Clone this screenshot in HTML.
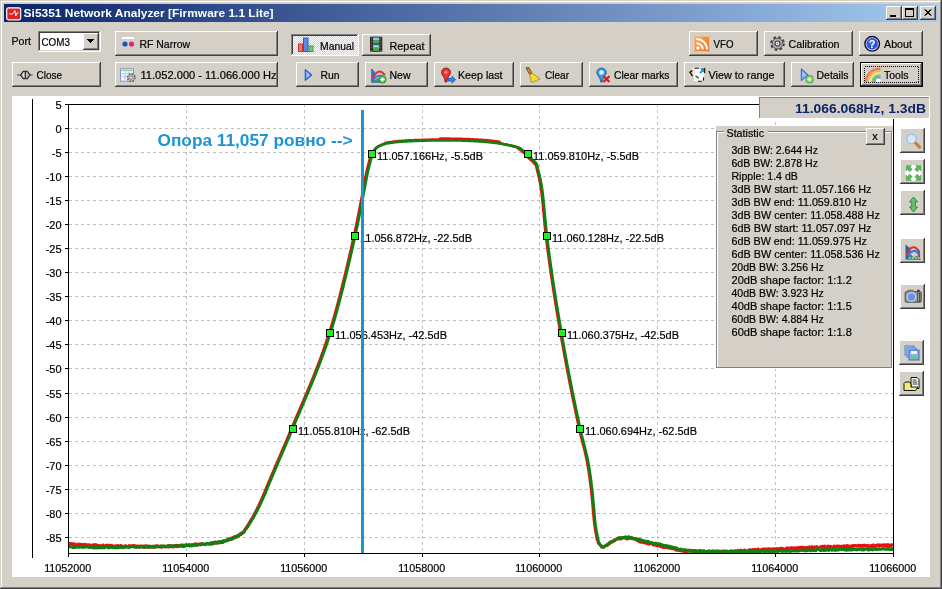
<!DOCTYPE html>
<html><head><meta charset="utf-8"><title>Si5351 Network Analyzer</title><style>html,body{margin:0;padding:0;background:#D4D0C8;overflow:hidden}svg{display:block;will-change:transform}</style></head><body>
<svg width="942" height="589" viewBox="0 0 942 589" font-family="Liberation Sans, sans-serif" shape-rendering="crispEdges">
<defs><linearGradient id="tg" x1="0" x2="1" y1="0" y2="0"><stop offset="0" stop-color="#0A246A"/><stop offset="1" stop-color="#A6CAF0"/></linearGradient><linearGradient id="og" x1="0" y1="0" x2="1" y2="1"><stop offset="0" stop-color="#F8AC68"/><stop offset="1" stop-color="#EE6C14"/></linearGradient><pattern id="dith" width="2" height="2" patternUnits="userSpaceOnUse"><rect width="2" height="2" fill="#D4D0C8"/><rect width="1" height="1" fill="#fff"/><rect x="1" y="1" width="1" height="1" fill="#fff"/></pattern></defs>
<rect x="0" y="0" width="942" height="589" fill="#D4D0C8" />
<rect x="1" y="1" width="939" height="1" fill="#FFFFFF" />
<rect x="1" y="1" width="1" height="586" fill="#FFFFFF" />
<rect x="0" y="588" width="942" height="1" fill="#404040" />
<rect x="941" y="0" width="1" height="589" fill="#404040" />
<rect x="1" y="587" width="940" height="1" fill="#808080" />
<rect x="940" y="1" width="1" height="587" fill="#808080" />
<rect x="4" y="4" width="934" height="18" fill="url(#tg)" />
<g shape-rendering="auto">
<g transform="translate(6,7)"><rect x="0.7" y="0.8" width="14" height="12" rx="1.8" fill="#E02424" stroke="#fff" stroke-width="1.2"/><path d="M3.5 7h2.5l1.500-1 1.300-2.500 1 5.500 1-3h1.700" fill="none" stroke="#fff" stroke-width="1"/></g>
</g>
<text x="23.6" y="17" font-size="11" font-weight="bold" fill="#fff" textLength="250" lengthAdjust="spacingAndGlyphs" >Si5351 Network Analyzer [Firmware 1.1 Lite]</text>
<rect x="886" y="6" width="16" height="14" fill="#D4D0C8" />
<rect x="886" y="6" width="15" height="1" fill="#FFFFFF" />
<rect x="886" y="6" width="1" height="13" fill="#FFFFFF" />
<rect x="886" y="19" width="16" height="1" fill="#404040" />
<rect x="901" y="6" width="1" height="14" fill="#404040" />
<rect x="887" y="18" width="14" height="1" fill="#808080" />
<rect x="900" y="7" width="1" height="12" fill="#808080" />
<rect x="902" y="6" width="16" height="14" fill="#D4D0C8" />
<rect x="902" y="6" width="15" height="1" fill="#FFFFFF" />
<rect x="902" y="6" width="1" height="13" fill="#FFFFFF" />
<rect x="902" y="19" width="16" height="1" fill="#404040" />
<rect x="917" y="6" width="1" height="14" fill="#404040" />
<rect x="903" y="18" width="14" height="1" fill="#808080" />
<rect x="916" y="7" width="1" height="12" fill="#808080" />
<rect x="920" y="6" width="16" height="14" fill="#D4D0C8" />
<rect x="920" y="6" width="15" height="1" fill="#FFFFFF" />
<rect x="920" y="6" width="1" height="13" fill="#FFFFFF" />
<rect x="920" y="19" width="16" height="1" fill="#404040" />
<rect x="935" y="6" width="1" height="14" fill="#404040" />
<rect x="921" y="18" width="14" height="1" fill="#808080" />
<rect x="934" y="7" width="1" height="12" fill="#808080" />
<rect x="890" y="15" width="6" height="2" fill="#000" />
<rect x="905" y="8" width="9" height="9" fill="#000" />
<rect x="906" y="10" width="7" height="6" fill="#D4D0C8" />
<path d="M924.5 9.5l6 6M925.5 9.5l6 6M930.5 9.5l-6 6M931.5 9.5l-6 6" stroke="#000" stroke-width="1" fill="none" shape-rendering="auto"/>
<text x="11.5" y="45" font-size="11" fill="#000" textLength="19.5" lengthAdjust="spacingAndGlyphs" stroke="#000" stroke-width="0.2" >Port</text>
<rect x="38" y="31" width="63" height="21" fill="#FFFFFF" />
<rect x="38" y="31" width="62" height="1" fill="#808080" />
<rect x="38" y="31" width="1" height="20" fill="#808080" />
<rect x="39" y="32" width="60" height="1" fill="#404040" />
<rect x="39" y="32" width="1" height="18" fill="#404040" />
<rect x="38" y="51" width="63" height="1" fill="#FFFFFF" />
<rect x="100" y="31" width="1" height="21" fill="#FFFFFF" />
<rect x="39" y="50" width="61" height="1" fill="#D4D0C8" />
<rect x="99" y="32" width="1" height="19" fill="#D4D0C8" />
<rect x="83" y="33" width="16" height="17" fill="#D4D0C8" />
<rect x="83" y="33" width="15" height="1" fill="#FFFFFF" />
<rect x="83" y="33" width="1" height="16" fill="#FFFFFF" />
<rect x="83" y="49" width="16" height="1" fill="#404040" />
<rect x="98" y="33" width="1" height="17" fill="#404040" />
<rect x="84" y="48" width="14" height="1" fill="#808080" />
<rect x="97" y="34" width="1" height="15" fill="#808080" />
<rect x="87" y="39" width="7" height="1" fill="#000" />
<rect x="88" y="40" width="5" height="1" fill="#000" />
<rect x="89" y="41" width="3" height="1" fill="#000" />
<rect x="90" y="42" width="1" height="1" fill="#000" />
<text x="41.5" y="46" font-size="11" fill="#000" textLength="28.5" lengthAdjust="spacingAndGlyphs" stroke="#000" stroke-width="0.2" >COM3</text>
<rect x="115" y="31" width="163" height="25" fill="#D4D0C8" />
<rect x="115" y="31" width="162" height="1" fill="#FFFFFF" />
<rect x="115" y="31" width="1" height="24" fill="#FFFFFF" />
<rect x="115" y="55" width="163" height="1" fill="#404040" />
<rect x="277" y="31" width="1" height="25" fill="#404040" />
<rect x="116" y="54" width="161" height="1" fill="#808080" />
<rect x="276" y="32" width="1" height="23" fill="#808080" />
<g shape-rendering="auto">
<g transform="translate(122,37)"><rect x="0" y="0" width="12" height="2" fill="#fff"/><circle cx="3" cy="7" r="2.6" fill="#1557C0"/><circle cx="9.5" cy="7" r="2.6" fill="#E8207A"/></g>
</g>
<text x="139.5" y="48" font-size="11" fill="#000" textLength="50.5" lengthAdjust="spacingAndGlyphs" stroke="#000" stroke-width="0.2" >RF Narrow</text>
<rect x="291" y="34" width="68" height="22" fill="url(#dith)" />
<rect x="291" y="34" width="67" height="1" fill="#808080" />
<rect x="291" y="34" width="1" height="21" fill="#808080" />
<rect x="292" y="35" width="65" height="1" fill="#404040" />
<rect x="292" y="35" width="1" height="19" fill="#404040" />
<rect x="291" y="55" width="68" height="1" fill="#FFFFFF" />
<rect x="358" y="34" width="1" height="22" fill="#FFFFFF" />
<g shape-rendering="auto">
<g transform="translate(298,37.5)"><rect x="0.5" y="6.5" width="4" height="7.5" fill="#F07070" stroke="#D03030"/><rect x="5.5" y="0.5" width="4.5" height="13.5" fill="#5C8CE8" stroke="#2C5CC8"/><rect x="11" y="8.5" width="4" height="5.5" fill="#78C878" stroke="#3C9C3C"/></g>
</g>
<text x="320" y="49.5" font-size="11" fill="#000" textLength="34" lengthAdjust="spacingAndGlyphs" stroke="#000" stroke-width="0.2" >Manual</text>
<rect x="362" y="34" width="69" height="22" fill="#D4D0C8" />
<rect x="362" y="34" width="68" height="1" fill="#FFFFFF" />
<rect x="362" y="34" width="1" height="21" fill="#FFFFFF" />
<rect x="362" y="55" width="69" height="1" fill="#404040" />
<rect x="430" y="34" width="1" height="22" fill="#404040" />
<rect x="363" y="54" width="67" height="1" fill="#808080" />
<rect x="429" y="35" width="1" height="20" fill="#808080" />
<g shape-rendering="auto">
<g transform="translate(370,36.8)"><rect x="0" y="0" width="12.300" height="14.800" fill="#2A2A2A"/><rect x="3" y="0" width="6.300" height="14.800" fill="#1A4020"/><rect x="3" y="0.800" width="6.300" height="3" fill="#8CC8E8"/><rect x="3" y="3.800" width="6.300" height="3" fill="#48A848"/><rect x="3" y="8" width="6.300" height="3" fill="#8CC8E8"/><rect x="3" y="11" width="6.300" height="3" fill="#48A848"/><path d="M1.500 1v13M10.800 1v13" stroke="#707070" stroke-width="1" stroke-dasharray="1.500 1.500"/></g>
</g>
<text x="389.5" y="49.5" font-size="11" fill="#000" textLength="35" lengthAdjust="spacingAndGlyphs" stroke="#000" stroke-width="0.2" >Repeat</text>
<rect x="689" y="31" width="69" height="25" fill="#D4D0C8" />
<rect x="689" y="31" width="68" height="1" fill="#FFFFFF" />
<rect x="689" y="31" width="1" height="24" fill="#FFFFFF" />
<rect x="689" y="55" width="69" height="1" fill="#404040" />
<rect x="757" y="31" width="1" height="25" fill="#404040" />
<rect x="690" y="54" width="67" height="1" fill="#808080" />
<rect x="756" y="32" width="1" height="23" fill="#808080" />
<g shape-rendering="auto">
<g transform="translate(694,36)"><rect x="0" y="0" width="16" height="16" rx="1.500" fill="url(#og)"/><rect x="0.500" y="0.500" width="15" height="15" rx="1.500" fill="none" stroke="#F8B878" stroke-width="1"/><circle cx="4" cy="12" r="1.800" fill="#fff"/><path d="M2.500 7.200a6.300 6.300 0 0 1 6.300 6.300" fill="none" stroke="#fff" stroke-width="2"/><path d="M2.500 3a10.500 10.500 0 0 1 10.500 10.500" fill="none" stroke="#fff" stroke-width="2"/></g>
</g>
<text x="713.5" y="48" font-size="11" fill="#000" textLength="20" lengthAdjust="spacingAndGlyphs" stroke="#000" stroke-width="0.2" >VFO</text>
<rect x="764" y="31" width="89" height="25" fill="#D4D0C8" />
<rect x="764" y="31" width="88" height="1" fill="#FFFFFF" />
<rect x="764" y="31" width="1" height="24" fill="#FFFFFF" />
<rect x="764" y="55" width="89" height="1" fill="#404040" />
<rect x="852" y="31" width="1" height="25" fill="#404040" />
<rect x="765" y="54" width="87" height="1" fill="#808080" />
<rect x="851" y="32" width="1" height="23" fill="#808080" />
<g shape-rendering="auto">
<g transform="translate(769.5,35.5)"><circle cx="8" cy="8" r="6.2" fill="none" stroke="#484848" stroke-width="2.4" stroke-dasharray="2.6 2.27"/><circle cx="8" cy="8" r="5.4" fill="#ABABAB" stroke="#505050" stroke-width="1"/><circle cx="8" cy="8" r="2.5" fill="#F4F4F4" stroke="#404040" stroke-width="1.2"/><circle cx="8" cy="8" r="0.9" fill="#909090"/></g>
</g>
<text x="788.5" y="48" font-size="11" fill="#000" textLength="51" lengthAdjust="spacingAndGlyphs" stroke="#000" stroke-width="0.2" >Calibration</text>
<rect x="859" y="31" width="64" height="25" fill="#D4D0C8" />
<rect x="859" y="31" width="63" height="1" fill="#FFFFFF" />
<rect x="859" y="31" width="1" height="24" fill="#FFFFFF" />
<rect x="859" y="55" width="64" height="1" fill="#404040" />
<rect x="922" y="31" width="1" height="25" fill="#404040" />
<rect x="860" y="54" width="62" height="1" fill="#808080" />
<rect x="921" y="32" width="1" height="23" fill="#808080" />
<g shape-rendering="auto">
<g transform="translate(864.2,35.8)"><circle cx="8" cy="8" r="7.300" fill="#C8D8FF" stroke="#10102C" stroke-width="1.400"/><circle cx="8" cy="8" r="5.700" fill="#2C54D4"/><circle cx="7" cy="6.500" r="3.500" fill="#4870E4" opacity="0.600"/><text x="8" y="12" font-size="11" font-weight="bold" fill="#fff" text-anchor="middle" font-family="Liberation Sans, sans-serif">?</text></g>
</g>
<text x="884" y="48" font-size="11" fill="#000" textLength="28" lengthAdjust="spacingAndGlyphs" stroke="#000" stroke-width="0.2" >About</text>
<rect x="12" y="62" width="89" height="25" fill="#D4D0C8" />
<rect x="12" y="62" width="88" height="1" fill="#FFFFFF" />
<rect x="12" y="62" width="1" height="24" fill="#FFFFFF" />
<rect x="12" y="86" width="89" height="1" fill="#404040" />
<rect x="100" y="62" width="1" height="25" fill="#404040" />
<rect x="13" y="85" width="87" height="1" fill="#808080" />
<rect x="99" y="63" width="1" height="23" fill="#808080" />
<g shape-rendering="auto">
<g transform="translate(17,69)"><path d="M0 6h3.800M12.800 6h3" stroke="#505050" stroke-width="1.1"/><path d="M3.500 6L6.300 2.300H10.300L13.100 6L10.300 9.700H6.300Z" fill="#BEBEBE" stroke="#181818" stroke-width="1.100" stroke-linejoin="round"/><path d="M6 4.500l1.500-1.500v6l-1.500-1.500z" fill="#E8E8E8"/><path d="M8.300 2.300v7.400" stroke="#181818" stroke-width="1.100"/></g>
</g>
<text x="36.5" y="78.5" font-size="11" fill="#000" textLength="25.5" lengthAdjust="spacingAndGlyphs" stroke="#000" stroke-width="0.2" >Close</text>
<rect x="115" y="62" width="163" height="25" fill="#D4D0C8" />
<rect x="115" y="62" width="162" height="1" fill="#FFFFFF" />
<rect x="115" y="62" width="1" height="24" fill="#FFFFFF" />
<rect x="115" y="86" width="163" height="1" fill="#404040" />
<rect x="277" y="62" width="1" height="25" fill="#404040" />
<rect x="116" y="85" width="161" height="1" fill="#808080" />
<rect x="276" y="63" width="1" height="23" fill="#808080" />
<g shape-rendering="auto">
<g transform="translate(120,68.2)"><rect x="0.500" y="0.500" width="13" height="12.500" fill="#EEF4FC" stroke="#7C9CD0" stroke-width="1"/><rect x="1.500" y="1.500" width="11" height="1.500" fill="#98CC98"/><path d="M1 5.500h12M1 8.500h12M5 4v8M9 4v8" stroke="#B8CCEC" stroke-width="1"/><circle cx="11.200" cy="9.400" r="3.800" fill="#B0B0B0" stroke="#686868" stroke-width="1.600" stroke-dasharray="1.600 1.380"/><circle cx="11.200" cy="9.400" r="1.400" fill="#F0F0F0" stroke="#707070" stroke-width="0.600"/></g>
</g>
<text x="140.5" y="79" font-size="11" fill="#000" textLength="136" lengthAdjust="spacingAndGlyphs" stroke="#000" stroke-width="0.2" >11.052.000 - 11.066.000 Hz</text>
<rect x="296" y="62" width="63" height="25" fill="#D4D0C8" />
<rect x="296" y="62" width="62" height="1" fill="#FFFFFF" />
<rect x="296" y="62" width="1" height="24" fill="#FFFFFF" />
<rect x="296" y="86" width="63" height="1" fill="#404040" />
<rect x="358" y="62" width="1" height="25" fill="#404040" />
<rect x="297" y="85" width="61" height="1" fill="#808080" />
<rect x="357" y="63" width="1" height="23" fill="#808080" />
<g shape-rendering="auto">
<g transform="translate(304.5,69)"><path d="M0.800 0.600L7.200 6L0.800 11.400z" fill="#6C9CEC" stroke="#2C5CC8" stroke-width="1.200" stroke-linejoin="round"/><path d="M2 3l3.500 3-3.500 3z" fill="#A0C0F8"/></g>
</g>
<text x="320.5" y="78.5" font-size="11" fill="#000" textLength="19" lengthAdjust="spacingAndGlyphs" stroke="#000" stroke-width="0.2" >Run</text>
<rect x="365" y="62" width="63" height="25" fill="#D4D0C8" />
<rect x="365" y="62" width="62" height="1" fill="#FFFFFF" />
<rect x="365" y="62" width="1" height="24" fill="#FFFFFF" />
<rect x="365" y="86" width="63" height="1" fill="#404040" />
<rect x="427" y="62" width="1" height="25" fill="#404040" />
<rect x="366" y="85" width="61" height="1" fill="#808080" />
<rect x="426" y="63" width="1" height="23" fill="#808080" />
<g shape-rendering="auto">
<g transform="translate(371,68)"><path d="M1 1v13h13" fill="none" stroke="#3060A8" stroke-width="1.6"/><path d="M1 1l3 3v9h-3z" fill="#3C6CC0"/><path d="M2 12c2-9 7-11 12-5" fill="none" stroke="#E03030" stroke-width="2"/><path d="M2 13c3-6 8-7 12-3" fill="none" stroke="#3C78E0" stroke-width="2"/><path d="M3 13.5l4-4 3 2.5v2z" fill="#38A048"/><circle cx="11.5" cy="11.5" r="3.6" fill="#58C058" stroke="#2C8C2C"/><path d="M11.5 9.3v4.4M9.3 11.5h4.4" stroke="#fff" stroke-width="1.4"/></g>
</g>
<text x="389.5" y="78.5" font-size="11" fill="#000" textLength="21" lengthAdjust="spacingAndGlyphs" stroke="#000" stroke-width="0.2" >New</text>
<rect x="434" y="62" width="80" height="25" fill="#D4D0C8" />
<rect x="434" y="62" width="79" height="1" fill="#FFFFFF" />
<rect x="434" y="62" width="1" height="24" fill="#FFFFFF" />
<rect x="434" y="86" width="80" height="1" fill="#404040" />
<rect x="513" y="62" width="1" height="25" fill="#404040" />
<rect x="435" y="85" width="78" height="1" fill="#808080" />
<rect x="512" y="63" width="1" height="23" fill="#808080" />
<g shape-rendering="auto">
<g transform="translate(441,67.5)"><path d="M5 0.6c-2.6 0-4.4 1.9-4.4 4.3 0 2.2 2 3.6 3 6.1l0.6 3.5h1.6l0.6-3.5c1-2.5 3-3.9 3-6.1 0-2.4-1.800-4.300-4.400-4.300z" fill="#E83838" stroke="#901010" stroke-width="1"/><circle cx="5" cy="4.800" r="1.5" fill="#FF9090"/><path d="M7 11h4v-2.200l3.600 3.400-3.600 3.400v-2.200h-4z" fill="#3888F0" stroke="#1050B0" stroke-width="0.800"/></g>
</g>
<text x="458" y="78.5" font-size="11" fill="#000" textLength="44.5" lengthAdjust="spacingAndGlyphs" stroke="#000" stroke-width="0.2" >Keep last</text>
<rect x="520" y="62" width="63" height="25" fill="#D4D0C8" />
<rect x="520" y="62" width="62" height="1" fill="#FFFFFF" />
<rect x="520" y="62" width="1" height="24" fill="#FFFFFF" />
<rect x="520" y="86" width="63" height="1" fill="#404040" />
<rect x="582" y="62" width="1" height="25" fill="#404040" />
<rect x="521" y="85" width="61" height="1" fill="#808080" />
<rect x="581" y="63" width="1" height="23" fill="#808080" />
<g shape-rendering="auto">
<g transform="translate(525,67.5)"><path d="M1 0.300l2.800-0.300 2.700 4.800-2.500 1.400z" fill="#C88838" stroke="#6C4810" stroke-width="0.900"/><path d="M4 6.300l2.600-1.500 0.800 1.200-2.700 1.600z" fill="#E05030"/><path d="M4.600 7.500l2.900-1.700 7.500 5.700-2.500 1 -1 1.200-2.300-0.300-1.200 1.300-2.300-0.500c0.300-2.300-0.200-4.500-1.100-6.700z" fill="#F4DC30" stroke="#A88C10" stroke-width="0.900" stroke-linejoin="round"/></g>
</g>
<text x="545" y="78.5" font-size="11" fill="#000" textLength="24" lengthAdjust="spacingAndGlyphs" stroke="#000" stroke-width="0.2" >Clear</text>
<rect x="589" y="62" width="89" height="25" fill="#D4D0C8" />
<rect x="589" y="62" width="88" height="1" fill="#FFFFFF" />
<rect x="589" y="62" width="1" height="24" fill="#FFFFFF" />
<rect x="589" y="86" width="89" height="1" fill="#404040" />
<rect x="677" y="62" width="1" height="25" fill="#404040" />
<rect x="590" y="85" width="87" height="1" fill="#808080" />
<rect x="676" y="63" width="1" height="23" fill="#808080" />
<g shape-rendering="auto">
<g transform="translate(596,67.5)"><path d="M5.500 0.600c-2.700 0-4.700 1.900-4.700 4.400 0 2.200 2.200 3.700 3.200 6.200l0.700 3.300h1.600l0.700-3.300c1-2.500 3.200-4 3.200-6.200 0-2.500-2-4.400-4.700-4.400z" fill="#3C9CE8" stroke="#1060A8" stroke-width="1"/><circle cx="5.500" cy="5" r="2.300" fill="#E8F4FF"/><path d="M7.500 8.500l6 6M13.500 8.500l-6 6" stroke="#E01818" stroke-width="2.200"/></g>
</g>
<text x="614" y="78.5" font-size="11" fill="#000" textLength="55.5" lengthAdjust="spacingAndGlyphs" stroke="#000" stroke-width="0.2" >Clear marks</text>
<rect x="684" y="62" width="101" height="25" fill="#D4D0C8" />
<rect x="684" y="62" width="100" height="1" fill="#FFFFFF" />
<rect x="684" y="62" width="1" height="24" fill="#FFFFFF" />
<rect x="684" y="86" width="101" height="1" fill="#404040" />
<rect x="784" y="62" width="1" height="25" fill="#404040" />
<rect x="685" y="85" width="99" height="1" fill="#808080" />
<rect x="783" y="63" width="1" height="23" fill="#808080" />
<g shape-rendering="auto">
<g transform="translate(689,67.5)"><path d="M3.700 0.300L16 0.300L14.500 14L5 13.500Z" fill="#fff"/><path d="M10.800 1L16 0.300L15.500 5.400L14 3.900L11.600 6.300L10.300 5L12.700 2.600Z" fill="#1C8CE0"/><path d="M5.500 0.800H10M15.700 0.500V5.800M9 13.800H13M14.500 10V13.200" stroke="#101010" stroke-width="1.100" fill="none"/><path d="M3.300 3.100L0.900 4.600L3.600 8.600" stroke="#101010" stroke-width="1.300" fill="none"/><path d="M6.500 8.300L9.700 10.600" stroke="#305838" stroke-width="1.400"/><path d="M5.800 2.500V6.200" stroke="#F0A8A8" stroke-width="1" stroke-dasharray="1.200 1"/></g>
</g>
<text x="708.5" y="78.5" font-size="11" fill="#000" textLength="66" lengthAdjust="spacingAndGlyphs" stroke="#000" stroke-width="0.2" >View to range</text>
<rect x="791" y="62" width="63" height="25" fill="#D4D0C8" />
<rect x="791" y="62" width="62" height="1" fill="#FFFFFF" />
<rect x="791" y="62" width="1" height="24" fill="#FFFFFF" />
<rect x="791" y="86" width="63" height="1" fill="#404040" />
<rect x="853" y="62" width="1" height="25" fill="#404040" />
<rect x="792" y="85" width="61" height="1" fill="#808080" />
<rect x="852" y="63" width="1" height="23" fill="#808080" />
<g shape-rendering="auto">
<g transform="translate(800.5,68)"><path d="M0.800 1L7.500 6.800L0.800 12.600z" fill="#78A8F0" stroke="#3C70D8" stroke-width="1.100" stroke-linejoin="round"/><path d="M2 3.800l3.500 3-3.500 3z" fill="#A8C8F8"/><rect x="5.500" y="7.800" width="7" height="7" rx="2" fill="#8CD078" stroke="#4CA040" stroke-width="1"/><path d="M9 9.300v4M7 11.300h4" stroke="#fff" stroke-width="1.300"/></g>
</g>
<text x="816.5" y="78.5" font-size="11" fill="#000" textLength="32" lengthAdjust="spacingAndGlyphs" stroke="#000" stroke-width="0.2" >Details</text>
<rect x="860" y="62" width="63" height="25" fill="#000" />
<rect x="861" y="63" width="61" height="23" fill="#D4D0C8" />
<rect x="861" y="63" width="60" height="1" fill="#FFFFFF" />
<rect x="861" y="63" width="1" height="22" fill="#FFFFFF" />
<rect x="861" y="85" width="61" height="1" fill="#404040" />
<rect x="921" y="63" width="1" height="23" fill="#404040" />
<rect x="862" y="84" width="59" height="1" fill="#808080" />
<rect x="920" y="64" width="1" height="21" fill="#808080" />
<rect x="864.5" y="66.5" width="54" height="16" fill="none" stroke="#000" stroke-width="1" stroke-dasharray="1 1"/>
<g shape-rendering="auto">
<g transform="translate(865.5,67)"><path d="M0.500 15a13 13 0 0 1 14.500-13" fill="none" stroke="#F07850" stroke-width="2.300"/><path d="M2.700 15a11 11 0 0 1 12.300-10.800" fill="none" stroke="#F8B060" stroke-width="2.300"/><path d="M4.900 15a8.800 8.800 0 0 1 10.100-8.600" fill="none" stroke="#F0E878" stroke-width="2.300"/><path d="M7.100 15a6.600 6.600 0 0 1 7.900-6.400" fill="none" stroke="#78C878" stroke-width="2.300"/><path d="M9.300 15a4.400 4.400 0 0 1 5.700-4.100" fill="none" stroke="#6898E0" stroke-width="2.300"/><path d="M10.500 15a2.500 2.500 0 0 1 4.500-2.200v2.200z" fill="#fff"/></g>
</g>
<text x="884" y="78.5" font-size="11" fill="#000" textLength="24.5" lengthAdjust="spacingAndGlyphs" stroke="#000" stroke-width="0.2" >Tools</text>
<rect x="12" y="96" width="918" height="481" fill="#FFFFFF" />
<rect x="32" y="99" width="1" height="459" fill="#000" />
<path d="M69 128.5H893" stroke="#C0C0C0" stroke-width="1" stroke-dasharray="3 3" fill="none"/>
<path d="M69 152.5H893" stroke="#C0C0C0" stroke-width="1" stroke-dasharray="3 3" fill="none"/>
<path d="M69 176.5H893" stroke="#C0C0C0" stroke-width="1" stroke-dasharray="3 3" fill="none"/>
<path d="M69 200.5H893" stroke="#C0C0C0" stroke-width="1" stroke-dasharray="3 3" fill="none"/>
<path d="M69 224.5H893" stroke="#C0C0C0" stroke-width="1" stroke-dasharray="3 3" fill="none"/>
<path d="M69 248.5H893" stroke="#C0C0C0" stroke-width="1" stroke-dasharray="3 3" fill="none"/>
<path d="M69 272.5H893" stroke="#C0C0C0" stroke-width="1" stroke-dasharray="3 3" fill="none"/>
<path d="M69 296.5H893" stroke="#C0C0C0" stroke-width="1" stroke-dasharray="3 3" fill="none"/>
<path d="M69 320.5H893" stroke="#C0C0C0" stroke-width="1" stroke-dasharray="3 3" fill="none"/>
<path d="M69 344.5H893" stroke="#C0C0C0" stroke-width="1" stroke-dasharray="3 3" fill="none"/>
<path d="M69 368.5H893" stroke="#C0C0C0" stroke-width="1" stroke-dasharray="3 3" fill="none"/>
<path d="M69 393.5H893" stroke="#C0C0C0" stroke-width="1" stroke-dasharray="3 3" fill="none"/>
<path d="M69 417.5H893" stroke="#C0C0C0" stroke-width="1" stroke-dasharray="3 3" fill="none"/>
<path d="M69 441.5H893" stroke="#C0C0C0" stroke-width="1" stroke-dasharray="3 3" fill="none"/>
<path d="M69 465.5H893" stroke="#C0C0C0" stroke-width="1" stroke-dasharray="3 3" fill="none"/>
<path d="M69 489.5H893" stroke="#C0C0C0" stroke-width="1" stroke-dasharray="3 3" fill="none"/>
<path d="M69 513.5H893" stroke="#C0C0C0" stroke-width="1" stroke-dasharray="3 3" fill="none"/>
<path d="M69 537.5H893" stroke="#C0C0C0" stroke-width="1" stroke-dasharray="3 3" fill="none"/>
<path d="M186.5 104V553" stroke="#C0C0C0" stroke-width="1" stroke-dasharray="3 3" fill="none"/>
<path d="M304.5 104V553" stroke="#C0C0C0" stroke-width="1" stroke-dasharray="3 3" fill="none"/>
<path d="M422.5 104V553" stroke="#C0C0C0" stroke-width="1" stroke-dasharray="3 3" fill="none"/>
<path d="M539.5 104V553" stroke="#C0C0C0" stroke-width="1" stroke-dasharray="3 3" fill="none"/>
<path d="M657.5 104V553" stroke="#C0C0C0" stroke-width="1" stroke-dasharray="3 3" fill="none"/>
<path d="M775.5 104V553" stroke="#C0C0C0" stroke-width="1" stroke-dasharray="3 3" fill="none"/>
<rect x="68" y="104" width="826" height="1" fill="#000" />
<rect x="68" y="553" width="826" height="1" fill="#000" />
<rect x="68" y="104" width="1" height="453" fill="#000" />
<rect x="893" y="104" width="1" height="453" fill="#000" />
<rect x="65" y="104" width="3" height="1" fill="#000" />
<text x="61.6" y="108.6" font-size="11" text-anchor="end" fill="#000" stroke="#000" stroke-width="0.2" >5</text>
<rect x="65" y="128" width="3" height="1" fill="#000" />
<text x="61.6" y="132.6" font-size="11" text-anchor="end" fill="#000" stroke="#000" stroke-width="0.2" >0</text>
<rect x="65" y="152" width="3" height="1" fill="#000" />
<text x="61.6" y="156.6" font-size="11" text-anchor="end" fill="#000" stroke="#000" stroke-width="0.2" >-5</text>
<rect x="65" y="176" width="3" height="1" fill="#000" />
<text x="61.6" y="180.6" font-size="11" text-anchor="end" fill="#000" stroke="#000" stroke-width="0.2" >-10</text>
<rect x="65" y="200" width="3" height="1" fill="#000" />
<text x="61.6" y="204.6" font-size="11" text-anchor="end" fill="#000" stroke="#000" stroke-width="0.2" >-15</text>
<rect x="65" y="224" width="3" height="1" fill="#000" />
<text x="61.6" y="228.6" font-size="11" text-anchor="end" fill="#000" stroke="#000" stroke-width="0.2" >-20</text>
<rect x="65" y="248" width="3" height="1" fill="#000" />
<text x="61.6" y="252.6" font-size="11" text-anchor="end" fill="#000" stroke="#000" stroke-width="0.2" >-25</text>
<rect x="65" y="272" width="3" height="1" fill="#000" />
<text x="61.6" y="276.6" font-size="11" text-anchor="end" fill="#000" stroke="#000" stroke-width="0.2" >-30</text>
<rect x="65" y="296" width="3" height="1" fill="#000" />
<text x="61.6" y="300.6" font-size="11" text-anchor="end" fill="#000" stroke="#000" stroke-width="0.2" >-35</text>
<rect x="65" y="320" width="3" height="1" fill="#000" />
<text x="61.6" y="324.6" font-size="11" text-anchor="end" fill="#000" stroke="#000" stroke-width="0.2" >-40</text>
<rect x="65" y="344" width="3" height="1" fill="#000" />
<text x="61.6" y="348.6" font-size="11" text-anchor="end" fill="#000" stroke="#000" stroke-width="0.2" >-45</text>
<rect x="65" y="368" width="3" height="1" fill="#000" />
<text x="61.6" y="372.6" font-size="11" text-anchor="end" fill="#000" stroke="#000" stroke-width="0.2" >-50</text>
<rect x="65" y="393" width="3" height="1" fill="#000" />
<text x="61.6" y="397.6" font-size="11" text-anchor="end" fill="#000" stroke="#000" stroke-width="0.2" >-55</text>
<rect x="65" y="417" width="3" height="1" fill="#000" />
<text x="61.6" y="421.6" font-size="11" text-anchor="end" fill="#000" stroke="#000" stroke-width="0.2" >-60</text>
<rect x="65" y="441" width="3" height="1" fill="#000" />
<text x="61.6" y="445.6" font-size="11" text-anchor="end" fill="#000" stroke="#000" stroke-width="0.2" >-65</text>
<rect x="65" y="465" width="3" height="1" fill="#000" />
<text x="61.6" y="469.6" font-size="11" text-anchor="end" fill="#000" stroke="#000" stroke-width="0.2" >-70</text>
<rect x="65" y="489" width="3" height="1" fill="#000" />
<text x="61.6" y="493.6" font-size="11" text-anchor="end" fill="#000" stroke="#000" stroke-width="0.2" >-75</text>
<rect x="65" y="513" width="3" height="1" fill="#000" />
<text x="61.6" y="517.6" font-size="11" text-anchor="end" fill="#000" stroke="#000" stroke-width="0.2" >-80</text>
<rect x="65" y="537" width="3" height="1" fill="#000" />
<text x="61.6" y="541.6" font-size="11" text-anchor="end" fill="#000" stroke="#000" stroke-width="0.2" >-85</text>
<rect x="68" y="553" width="1" height="4" fill="#000" />
<text x="67.7" y="571.8" font-size="11" text-anchor="middle" fill="#000" textLength="47" lengthAdjust="spacingAndGlyphs" stroke="#000" stroke-width="0.2" >11052000</text>
<rect x="186" y="553" width="1" height="4" fill="#000" />
<text x="185.7" y="571.8" font-size="11" text-anchor="middle" fill="#000" textLength="47" lengthAdjust="spacingAndGlyphs" stroke="#000" stroke-width="0.2" >11054000</text>
<rect x="304" y="553" width="1" height="4" fill="#000" />
<text x="303.7" y="571.8" font-size="11" text-anchor="middle" fill="#000" textLength="47" lengthAdjust="spacingAndGlyphs" stroke="#000" stroke-width="0.2" >11056000</text>
<rect x="422" y="553" width="1" height="4" fill="#000" />
<text x="421.7" y="571.8" font-size="11" text-anchor="middle" fill="#000" textLength="47" lengthAdjust="spacingAndGlyphs" stroke="#000" stroke-width="0.2" >11058000</text>
<rect x="539" y="553" width="1" height="4" fill="#000" />
<text x="538.7" y="571.8" font-size="11" text-anchor="middle" fill="#000" textLength="47" lengthAdjust="spacingAndGlyphs" stroke="#000" stroke-width="0.2" >11060000</text>
<rect x="657" y="553" width="1" height="4" fill="#000" />
<text x="656.7" y="571.8" font-size="11" text-anchor="middle" fill="#000" textLength="47" lengthAdjust="spacingAndGlyphs" stroke="#000" stroke-width="0.2" >11062000</text>
<rect x="775" y="553" width="1" height="4" fill="#000" />
<text x="774.7" y="571.8" font-size="11" text-anchor="middle" fill="#000" textLength="47" lengthAdjust="spacingAndGlyphs" stroke="#000" stroke-width="0.2" >11064000</text>
<rect x="893" y="553" width="1" height="4" fill="#000" />
<text x="892.7" y="571.8" font-size="11" text-anchor="middle" fill="#000" textLength="47" lengthAdjust="spacingAndGlyphs" stroke="#000" stroke-width="0.2" >11066000</text>
<clipPath id="cc"><rect x="69" y="105" width="824" height="448"/></clipPath>
<g shape-rendering="auto" fill="none" stroke-linejoin="round" stroke-linecap="butt" clip-path="url(#cc)">
<path d="M68.0 543.8L68.5 543.5L69.0 544.5L69.5 543.4L70.0 544.4L70.5 544.0L71.0 543.4L71.5 544.4L72.0 543.5L72.5 544.3L73.0 543.6L73.5 543.6L74.0 544.3L74.5 545.1L75.0 543.8L75.5 544.0L76.0 544.8L76.5 545.5L77.0 544.8L77.5 544.4L78.0 545.6L78.5 543.8L79.0 545.4L79.5 544.3L80.0 544.0L80.5 544.0L81.0 544.4L81.5 545.5L82.0 544.2L82.5 545.0L83.0 545.2L83.5 544.7L84.0 545.0L84.5 544.1L85.0 544.1L85.5 544.4L86.0 545.4L86.5 544.9L87.0 544.7L87.5 545.3L88.0 545.0L88.5 544.7L89.0 545.7L89.5 545.6L90.0 544.7L90.5 545.4L91.0 545.3L91.5 546.0L92.0 545.7L92.5 544.9L93.0 546.3L93.5 544.6L94.0 545.2L94.5 545.9L95.0 544.7L95.5 545.4L96.0 544.5L96.5 545.8L97.0 546.0L97.5 545.6L98.0 546.3L98.5 545.2L99.0 545.9L99.5 545.8L100.0 545.8L100.5 545.5L101.0 546.3L101.5 546.5L102.0 545.6L102.5 546.0L103.0 544.8L103.5 546.1L104.0 546.0L104.5 546.7L105.0 546.4L105.5 545.3L106.0 545.6L106.5 546.1L107.0 544.9L107.5 545.7L108.0 545.2L108.5 545.1L109.0 545.0L109.5 546.4L110.0 545.1L110.5 545.4L111.0 545.7L111.5 546.7L112.0 545.1L112.5 545.9L113.0 546.1L113.5 546.7L114.0 546.6L114.5 546.7L115.0 545.6L115.5 545.9L116.0 545.8L116.5 546.8L117.0 547.0L117.5 545.4L118.0 545.4L118.5 545.6L119.0 545.6L119.5 546.1L120.0 546.3L120.5 545.7L121.0 545.2L121.5 546.0L122.0 545.9L122.5 546.3L123.0 547.1L123.5 546.6L124.0 546.2L124.5 546.5L125.0 546.6L125.5 545.4L126.0 547.1L126.5 546.8L127.0 547.0L127.5 546.9L128.0 546.1L128.5 546.1L129.0 545.5L129.5 546.6L130.0 545.5L130.5 545.5L131.0 545.8L131.5 545.7L132.0 546.1L132.5 545.5L133.0 545.4L133.5 545.7L134.0 545.6L134.5 546.2L135.0 545.5L135.5 547.2L136.0 546.7L136.5 545.8L137.0 546.0L137.5 546.2L138.0 546.2L138.5 545.8L139.0 547.2L139.5 547.5L140.0 546.5L140.5 546.5L141.0 545.7L141.5 545.8L142.0 546.3L142.5 546.1L143.0 547.3L143.5 545.9L144.0 545.7L144.5 547.5L145.0 546.7L145.5 545.9L146.0 546.7L146.5 545.7L147.0 546.7L147.5 547.6L148.0 547.4L148.5 547.1L149.0 546.2L149.5 546.4L150.0 546.1L150.5 547.3L151.0 546.8L151.5 547.2L152.0 546.3L152.5 546.1L153.0 547.3L153.5 547.6L154.0 547.3L154.5 547.2L155.0 547.3L155.5 547.1L156.0 546.0L156.5 546.6L157.0 546.3L157.5 545.6L158.0 545.6L158.5 546.1L159.0 546.0L159.5 546.9L160.0 547.4L160.5 546.4L161.0 547.3L161.5 547.4L162.0 547.4L162.5 546.2L163.0 545.9L163.5 545.9L164.0 545.8L164.5 545.8L165.0 546.6L165.5 547.1L166.0 547.0L166.5 546.3L167.0 546.6L167.5 546.9L168.0 545.4L168.5 546.6L169.0 547.1L169.5 546.8L170.0 546.7L170.5 546.1L171.0 545.5L171.5 546.7L172.0 545.8L172.5 546.7L173.0 547.0L173.5 545.9L174.0 545.9L174.5 546.9L175.0 546.5L175.5 545.3L176.0 545.2L176.5 545.3L177.0 546.7L177.5 546.5L178.0 545.2L178.5 546.5L179.0 546.8L179.5 546.1L180.0 545.5L180.5 545.9L181.0 545.0L181.5 544.8L182.0 546.6L182.5 546.0L183.0 545.7L183.5 546.5L184.0 545.5L184.5 546.3L185.0 546.2L185.5 544.9L186.0 545.0L186.5 545.1L187.0 544.9L187.5 545.6L188.0 544.9L188.5 545.2L189.0 544.6L189.5 546.1L190.0 545.0L190.5 545.1L191.0 545.4L191.5 546.0L192.0 545.0L192.5 545.9L193.0 545.1L193.5 545.1L194.0 545.0L194.5 544.0L195.0 544.8L195.5 544.2L196.0 543.8L196.5 545.4L197.0 544.1L197.5 544.6L198.0 545.1L198.5 544.7L199.0 544.2L199.5 544.6L200.0 544.6L200.5 545.0L201.0 543.6L201.5 544.5L202.0 543.8L202.5 543.8L203.0 544.7L203.5 544.2L204.0 544.2L204.5 544.6L205.0 544.8L205.5 543.8L206.0 544.1L206.5 543.9L207.0 543.8L207.5 544.1L208.0 543.6L208.5 543.7L209.0 543.6L209.5 544.4L210.0 543.9L210.5 544.2L211.0 544.3L211.5 542.8L212.0 543.4L212.5 544.1L213.0 543.8L213.5 542.4L214.0 542.3L214.5 542.8L215.0 542.0L215.5 542.3L216.0 541.9L216.5 543.0L217.0 543.2L217.5 543.3L218.0 541.8L218.5 542.8L219.0 542.6L219.5 541.5L220.0 542.9L220.5 543.0L221.0 541.4L221.5 542.7L222.0 541.5L222.5 541.6L223.0 542.5L223.5 542.0L224.0 540.6L224.5 541.0L225.0 541.0L225.5 540.5L226.0 540.1L226.5 540.1L227.0 540.8L227.5 539.2L228.0 540.1L228.5 539.7L229.0 538.7L229.5 539.1L230.0 539.5L230.5 539.1L231.0 538.0L231.5 539.7L232.0 539.1L232.5 539.2L233.0 537.3L233.5 537.4L234.0 536.8L234.5 538.0L235.0 536.8L235.5 536.3L236.0 536.6L236.5 537.4L237.0 536.9L237.5 535.5L238.0 535.1L238.5 536.3L239.0 535.3L239.5 535.3L240.0 533.8L240.5 533.4L241.0 534.3L241.5 533.4L242.0 532.4L242.5 533.7L243.0 532.8L243.5 532.7L244.0 530.8L244.5 531.9L245.0 529.8L244.3 530.8L244.8 529.4L245.3 528.7L245.8 528.0L246.3 527.3L246.8 526.5L247.3 525.7L247.8 524.9L248.3 524.1L248.8 523.3L249.3 522.5L249.8 521.6L250.3 520.8L250.8 520.0L251.3 519.2L251.8 518.3L252.3 517.5L252.8 516.6L253.3 515.7L253.8 514.8L254.3 513.9L254.8 513.0L255.3 512.0L255.8 511.1L256.3 510.1L256.8 509.1L257.3 508.1L257.8 507.1L258.3 506.1L258.8 505.1L259.3 504.0L259.8 503.0L260.3 501.9L260.8 500.8L261.3 499.7L261.8 498.6L262.3 497.4L262.8 496.3L263.3 495.1L263.8 493.9L264.3 492.7L264.8 491.5L265.3 490.2L265.8 489.0L266.3 487.8L266.8 486.6L267.3 485.4L267.8 484.2L268.3 483.0L268.8 481.8L269.3 480.6L269.8 479.5L270.3 478.3L270.8 477.1L271.3 475.9L271.8 474.8L272.3 473.6L272.8 472.4L273.3 471.2L273.8 470.1L274.3 468.9L274.8 467.7L275.3 466.5L275.8 465.4L276.3 464.2L276.8 463.0L277.3 461.8L277.8 460.7L278.3 459.5L278.8 458.3L279.3 457.2L279.8 456.0L280.3 454.8L280.8 453.7L281.3 452.5L281.8 451.4L282.3 450.2L282.8 449.0L283.3 447.9L283.8 446.7L284.3 445.5L284.8 444.4L285.3 443.2L285.8 442.1L286.3 440.9L286.8 439.7L287.3 438.5L287.8 437.4L288.3 436.2L288.8 435.0L289.3 433.8L289.8 432.6L290.3 431.4L290.8 430.2L291.3 429.0L291.8 427.8L292.3 426.6L292.8 425.4L293.3 424.2L293.8 423.0L294.3 421.8L294.8 420.6L295.3 419.4L295.8 418.3L296.3 417.1L296.8 415.9L297.3 414.7L297.8 413.6L298.3 412.4L298.8 411.2L299.3 410.1L299.8 408.9L300.3 407.7L300.8 406.6L301.3 405.4L301.8 404.3L302.3 403.1L302.8 401.9L303.3 400.8L303.8 399.6L304.3 398.4L304.8 397.3L305.3 396.1L305.8 394.9L306.3 393.7L306.8 392.6L307.3 391.4L307.8 390.2L308.3 389.0L308.8 387.8L309.3 386.6L309.8 385.4L310.3 384.2L310.8 383.0L311.3 381.8L311.8 380.6L312.3 379.3L312.8 378.1L313.3 376.9L313.8 375.6L314.3 374.4L314.8 373.1L315.3 371.9L315.8 370.6L316.3 369.3L316.8 368.0L317.3 366.7L317.8 365.4L318.3 364.1L318.8 362.8L319.3 361.5L319.8 360.1L320.3 358.8L320.8 357.4L321.3 356.1L321.8 354.7L322.3 353.3L322.8 351.9L323.3 350.5L323.8 349.1L324.3 347.7L324.8 346.2L325.3 344.8L325.8 343.3L326.3 341.8L326.8 340.3L327.3 338.8L327.8 337.3L328.3 335.8L328.8 334.2L329.3 332.7L329.8 331.1L330.3 329.5L330.8 327.9L331.3 326.3L331.8 324.6L332.3 322.9L332.8 321.2L333.3 319.5L333.8 317.8L334.3 316.0L334.8 314.3L335.3 312.5L335.8 310.7L336.3 308.8L336.8 307.0L337.3 305.1L337.8 303.3L338.3 301.4L338.8 299.5L339.3 297.6L339.8 295.6L340.3 293.7L340.8 291.7L341.3 289.7L341.8 287.8L342.3 285.8L342.8 283.7L343.3 281.7L343.8 279.7L344.3 277.6L344.8 275.5L345.3 273.5L345.8 271.4L346.3 269.3L346.8 267.2L347.3 265.1L347.8 262.9L348.3 260.8L348.8 258.6L349.3 256.5L349.8 254.3L350.3 252.1L350.8 250.0L351.3 247.8L351.8 245.6L352.3 243.4L352.8 241.1L353.3 238.9L353.8 236.7L354.3 234.4L354.8 232.1L355.3 229.8L355.8 227.4L356.3 225.0L356.8 222.5L357.3 220.0L357.8 217.5L358.3 215.0L358.8 212.4L359.3 209.9L359.8 207.3L360.3 204.8L360.8 202.2L361.3 199.7L361.8 197.1L362.3 194.5L362.8 191.8L363.3 189.1L363.8 186.3L364.3 183.6L364.8 180.9L365.3 178.3L365.8 175.8L366.3 173.3L366.8 171.0L367.3 168.9L367.8 166.8L368.3 164.8L368.8 162.8L369.3 160.9L369.8 159.1L370.3 157.5L372.0 156.0L372.5 154.6L373.0 153.4L373.5 152.2L374.0 151.1L374.5 150.1L375.0 149.2L375.5 148.6L376.0 148.1L376.5 147.7L377.0 147.3L377.5 147.0L378.0 146.7L378.5 146.4L379.0 146.1L379.5 145.9L380.0 145.7L380.5 145.5L381.0 145.2L381.5 145.0L382.0 144.8L382.5 144.6L383.0 144.4L383.5 144.3L384.0 144.1L384.5 144.0L385.0 143.1L385.5 143.0L386.0 142.9L386.5 142.8L387.0 142.7L387.5 142.6L388.0 142.5L388.5 142.4L389.0 142.4L389.5 142.3L390.0 142.2L390.5 142.1L391.0 142.1L391.5 142.0L392.0 141.9L392.5 141.9L393.0 141.8L393.5 141.7L394.0 141.7L394.5 141.6L395.0 141.5L395.5 141.5L396.0 141.4L396.5 141.4L397.0 141.3L397.5 141.2L398.0 141.2L398.5 141.2L399.0 141.1L399.5 141.1L400.0 141.0L400.5 141.0L401.0 141.0L401.5 140.9L402.0 140.9L402.5 140.9L403.0 140.8L403.5 140.8L404.0 140.8L404.5 140.7L405.0 140.7L405.5 140.7L406.0 140.6L406.5 140.6L407.0 140.6L407.5 140.6L408.0 140.5L408.5 140.5L409.0 140.5L409.5 140.4L410.0 140.4L410.5 140.4L411.0 140.4L411.5 140.4L412.0 140.3L412.5 140.3L413.0 140.3L413.5 140.3L414.0 140.2L414.5 140.2L415.0 140.2L415.5 140.2L416.0 140.2L416.5 140.1L417.0 140.1L417.5 140.1L418.0 140.1L418.5 140.1L419.0 140.1L419.5 140.0L420.0 140.0L420.5 140.0L421.0 140.0L421.5 140.0L422.0 140.0L422.5 140.0L423.0 139.9L423.5 139.9L424.0 139.9L424.5 139.9L425.0 139.9L425.5 139.9L426.0 139.9L426.5 139.8L427.0 139.8L427.5 139.8L428.0 139.8L428.5 139.8L429.0 139.8L429.5 139.8L430.0 139.8L430.5 139.7L431.0 139.7L431.5 139.7L432.0 139.7L432.5 139.7L433.0 139.7L433.5 139.7L434.0 139.7L434.5 139.7L435.0 139.7L435.5 139.7L436.0 139.6L436.5 139.6L437.0 139.6L437.5 139.6L438.0 139.6L438.5 139.6L439.0 139.6L439.5 139.6L440.0 138.7L440.5 138.7L441.0 138.7L441.5 138.7L442.0 138.7L442.5 138.7L443.0 138.7L443.5 138.7L444.0 138.7L444.5 138.7L445.0 138.7L445.5 138.7L446.0 138.7L446.5 138.7L447.0 138.7L447.5 138.7L448.0 138.7L448.5 138.7L449.0 138.7L449.5 138.7L450.0 138.7L450.5 138.8L451.0 138.8L451.5 138.8L452.0 138.8L452.5 138.8L453.0 138.8L453.5 138.8L454.0 138.8L454.5 138.8L455.0 138.8L455.5 138.8L456.0 138.8L456.5 138.8L457.0 138.8L457.5 138.9L458.0 138.9L458.5 138.9L459.0 138.9L459.5 138.9L460.0 138.9L460.5 138.9L461.0 138.9L461.5 138.9L462.0 138.9L462.5 139.0L463.0 139.0L463.5 139.0L464.0 139.0L464.5 139.0L465.0 139.0L465.5 139.1L466.0 139.1L466.5 139.1L467.0 139.1L467.5 139.1L468.0 139.2L468.5 139.2L469.0 139.2L469.5 139.2L470.0 139.3L470.5 139.3L471.0 139.3L471.5 139.3L472.0 139.4L472.5 139.4L473.0 139.4L473.5 139.4L474.0 139.5L474.5 139.5L475.0 139.5L475.5 139.6L476.0 139.6L476.5 139.6L477.0 139.6L477.5 139.7L478.0 139.7L478.5 139.7L479.0 139.8L479.5 139.8L480.0 139.8L480.5 139.9L481.0 139.9L481.5 139.9L482.0 140.0L482.5 140.0L483.0 140.0L483.5 140.1L484.0 140.1L484.5 140.2L485.0 140.2L485.5 140.2L486.0 140.3L486.5 140.3L487.0 140.4L487.5 140.4L488.0 140.5L488.5 140.5L489.0 140.6L489.5 140.6L490.0 140.7L490.5 140.7L491.0 140.8L491.5 140.8L492.0 140.9L492.5 140.9L493.0 141.0L493.5 141.0L494.0 141.1L494.5 141.2L495.0 141.2L495.5 141.3L496.0 141.3L496.5 141.4L497.0 141.5L497.5 141.5L498.0 141.6L498.5 141.7L499.0 141.7L499.5 141.8L500.0 143.5L500.5 143.6L501.0 143.6L501.5 143.7L502.0 143.8L502.5 143.9L503.0 144.0L503.5 144.1L504.0 144.2L504.5 144.3L505.0 144.3L505.5 144.4L506.0 144.5L506.5 144.6L507.0 144.7L507.5 144.9L508.0 145.0L508.5 145.1L509.0 145.2L509.5 145.3L510.0 145.4L510.5 145.5L511.0 145.6L511.5 145.7L512.0 145.9L512.5 146.0L513.0 146.1L513.5 146.2L514.0 146.4L514.5 146.5L515.0 146.6L515.5 146.8L516.0 146.9L516.5 147.1L517.0 147.2L517.5 147.4L518.0 147.6L518.5 147.8L519.0 148.0L519.5 148.2L520.0 148.5L518.5 148.7L519.0 149.0L519.5 149.4L520.0 149.7L520.5 150.1L521.0 150.4L521.5 150.8L522.0 151.2L522.5 151.6L523.0 152.1L523.5 152.5L524.0 152.9L524.5 153.4L525.0 153.9L525.5 154.3L526.0 154.8L526.5 155.3L527.0 155.9L527.5 156.5L528.0 157.1L528.5 157.7L529.0 158.3L529.5 158.8L530.0 159.3L530.5 159.7L531.0 160.1L531.5 160.5L532.0 160.9L532.5 161.4L533.0 161.9L533.5 162.4L534.0 163.1L534.5 163.9L536.0 164.9L536.5 167.0L537.0 169.7L537.5 171.7L538.0 173.4L538.5 175.4L539.0 177.7L539.5 180.0L540.0 182.5L540.5 185.3L541.0 188.4L541.5 192.0L542.0 196.3L542.5 201.1L543.0 206.2L543.5 211.6L544.0 217.0L544.5 222.4L545.0 227.5L545.5 232.4L546.0 236.7L546.5 240.7L547.0 244.7L547.5 248.5L548.0 252.4L548.5 256.1L549.0 259.8L549.5 263.4L550.0 267.0L550.5 270.5L551.0 274.0L551.5 277.4L552.0 280.8L552.5 284.1L553.0 287.4L553.5 290.6L554.0 293.8L554.5 296.9L555.0 300.1L555.5 303.2L556.0 306.2L556.5 309.3L557.0 312.3L557.5 315.3L558.0 318.3L558.5 321.2L559.0 324.2L559.5 327.1L560.0 330.0L560.5 332.9L561.0 335.8L561.5 338.7L562.0 341.5L562.5 344.3L563.0 347.1L563.5 349.9L564.0 352.7L564.5 355.4L565.0 358.1L565.5 360.8L566.0 363.5L566.5 366.2L567.0 368.8L567.5 371.4L568.0 374.0L568.5 376.6L569.0 379.2L569.5 381.7L570.0 384.3L570.5 386.8L571.0 389.3L571.5 391.8L572.0 394.3L572.5 396.7L573.0 399.2L573.5 401.6L574.0 404.0L574.5 406.4L575.0 408.8L575.5 411.2L576.0 413.6L576.5 415.9L577.0 418.3L577.5 420.6L578.0 423.0L578.5 425.3L579.0 427.6L579.5 429.9L580.0 432.1L580.5 434.2L581.0 436.3L581.5 438.3L582.0 440.2L582.5 442.1L583.0 444.1L583.5 446.0L584.0 448.0L584.5 450.0L585.0 452.0L585.5 454.2L586.0 456.4L586.5 458.8L587.0 461.3L587.5 463.9L588.0 466.7L588.5 469.8L589.0 473.1L589.5 476.7L590.0 480.4L590.5 484.4L591.0 488.5L591.5 492.8L592.0 497.8L592.5 503.5L593.0 509.3L593.5 515.1L594.0 520.4L594.5 524.9L595.0 528.3L595.5 531.2L596.0 533.7L596.5 536.7L597.0 539.7L597.5 540.4L598.0 541.7L598.5 543.8L600.0 544.3L600.5 544.9L601.0 545.5L601.5 545.6L602.0 546.2L602.5 546.6L603.0 546.6L603.5 547.5L604.0 546.4L604.5 546.6L605.0 545.8L605.5 545.9L606.0 545.0L606.5 545.1L607.0 544.3L607.5 545.3L608.0 544.5L608.5 543.4L609.0 543.5L609.5 544.0L610.0 541.9L610.5 543.0L611.0 541.9L611.5 541.8L612.0 542.2L612.5 541.0L613.0 541.0L613.5 541.0L614.0 541.4L614.5 539.8L615.0 540.6L615.5 540.1L616.0 539.8L616.5 539.1L617.0 538.9L617.5 538.1L618.0 538.2L618.5 538.0L619.0 539.2L619.5 538.1L620.0 537.9L620.5 537.6L621.0 539.1L621.5 539.1L622.0 538.6L622.5 537.8L623.0 537.6L623.5 537.7L624.0 538.0L624.5 537.3L625.0 537.9L625.5 537.5L626.0 538.9L626.5 539.0L627.0 538.1L627.5 537.6L628.0 539.1L628.5 537.8L629.0 538.0L629.5 537.4L630.0 538.2L630.5 538.5L631.0 538.7L631.5 538.2L632.0 538.9L632.5 538.0L633.0 538.7L633.5 538.5L634.0 539.2L634.5 538.7L635.0 538.8L635.5 539.5L636.0 539.5L636.5 540.4L637.0 540.4L637.5 541.0L638.0 541.0L638.5 541.3L639.0 541.7L639.5 540.9L640.0 540.9L640.5 542.4L641.0 540.9L641.5 542.2L642.0 542.1L642.5 541.0L643.0 542.8L643.5 543.0L644.0 542.6L644.5 542.9L645.0 543.2L645.5 542.0L646.0 542.8L646.5 542.9L647.0 543.7L647.5 543.8L648.0 543.9L648.5 543.6L649.0 544.3L649.5 544.0L650.0 544.1L650.5 543.3L651.0 543.0L651.5 543.4L652.0 543.9L652.5 543.5L653.0 545.1L653.5 544.7L654.0 544.9L654.5 545.0L655.0 545.2L655.5 545.0L656.0 544.1L656.5 545.8L657.0 545.8L657.5 545.5L658.0 545.6L658.5 546.0L659.0 544.9L659.5 546.4L660.0 545.5L660.5 545.3L661.0 545.8L661.5 546.8L662.0 545.9L662.5 547.0L663.0 547.6L663.5 546.8L664.0 546.7L664.5 547.0L665.0 547.5L665.5 547.8L666.0 547.6L666.5 547.7L667.0 546.7L667.5 546.9L668.0 547.3L668.5 548.3L669.0 547.6L669.5 548.2L670.0 547.2L670.5 547.4L671.0 547.9L671.5 548.8L672.0 549.0L672.5 549.0L673.0 548.4L673.5 548.9L674.0 548.9L674.5 549.0L675.0 548.4L675.5 550.0L676.0 548.7L676.5 550.4L677.0 550.4L677.5 548.6L678.0 549.6L678.5 550.4L679.0 550.8L679.5 549.9L680.0 549.6L680.5 549.6L681.0 551.2L681.5 549.8L682.0 550.7L682.5 549.9L683.0 550.7L683.5 551.7L684.0 550.1L684.5 551.6L685.0 551.0L685.5 551.8L686.0 551.5L686.5 550.6L687.0 552.0L687.5 551.2L688.0 550.3L688.5 550.2L689.0 551.2L689.5 551.1L690.0 550.8L690.5 550.5L691.0 550.9L691.5 550.9L692.0 551.9L692.5 550.2L693.0 551.7L693.5 551.9L694.0 550.5L694.5 552.1L695.0 551.7L695.5 552.0L696.0 550.8L696.5 551.0L697.0 551.0L697.5 552.2L698.0 551.4L698.5 550.9L699.0 551.1L699.5 550.8L700.0 550.3L700.5 550.4L701.0 551.9L701.5 550.8L702.0 552.1L702.5 550.8L703.0 550.8L703.5 551.3L704.0 550.7L704.5 551.1L705.0 552.3L705.5 552.2L706.0 552.0L706.5 551.7L707.0 552.3L707.5 552.3L708.0 551.6L708.5 551.9L709.0 550.6L709.5 552.0L710.0 551.4L710.5 552.0L711.0 551.8L711.5 551.1L712.0 550.6L712.5 552.4L713.0 550.8L713.5 551.5L714.0 551.3L714.5 551.2L715.0 552.1L715.5 552.5L716.0 551.1L716.5 551.9L717.0 551.2L717.5 551.7L718.0 551.4L718.5 550.9L719.0 550.9L719.5 551.0L720.0 552.4L720.5 551.6L721.0 551.0L721.5 552.4L722.0 552.6L722.5 551.5L723.0 550.9L723.5 551.0L724.0 550.8L724.5 551.3L725.0 550.8L725.5 551.1L726.0 551.1L726.5 551.7L727.0 552.4L727.5 552.1L728.0 551.4L728.5 551.4L729.0 551.6L729.5 551.3L730.0 551.2L730.5 550.7L731.0 551.1L731.5 552.4L732.0 550.7L732.5 551.4L733.0 551.7L733.5 552.1L734.0 550.8L734.5 550.8L735.0 550.8L735.5 551.0L736.0 551.1L736.5 552.1L737.0 551.9L737.5 551.9L738.0 550.1L738.5 550.1L739.0 551.5L739.5 551.8L740.0 550.9L740.5 551.1L741.0 549.9L741.5 550.7L742.0 551.7L742.5 551.5L743.0 551.5L743.5 551.7L744.0 550.2L744.5 549.9L745.0 550.0L745.5 550.7L746.0 551.0L746.5 551.4L747.0 551.0L747.5 550.8L748.0 551.0L748.5 550.3L749.0 550.5L749.5 549.5L750.0 550.9L750.5 549.8L751.0 551.1L751.5 550.5L752.0 549.8L752.5 549.4L753.0 549.7L753.5 550.4L754.0 550.5L754.5 549.3L755.0 549.2L755.5 550.0L756.0 550.1L756.5 549.7L757.0 549.3L757.5 550.1L758.0 548.8L758.5 549.4L759.0 549.7L759.5 550.6L760.0 550.0L760.5 550.5L761.0 549.6L761.5 549.1L762.0 549.1L762.5 550.5L763.0 550.0L763.5 549.2L764.0 548.6L764.5 549.5L765.0 549.9L765.5 549.3L766.0 549.0L766.5 549.8L767.0 550.3L767.5 548.9L768.0 548.5L768.5 549.1L769.0 549.2L769.5 549.7L770.0 548.7L770.5 549.9L771.0 549.8L771.5 549.3L772.0 548.7L772.5 550.2L773.0 548.8L773.5 549.8L774.0 548.6L774.5 548.6L775.0 549.7L775.5 548.7L776.0 550.0L776.5 549.1L777.0 548.4L777.5 548.5L778.0 548.9L778.5 549.3L779.0 549.9L779.5 548.3L780.0 548.7L780.5 548.3L781.0 549.9L781.5 548.2L782.0 548.0L782.5 548.0L783.0 548.6L783.5 549.6L784.0 549.5L784.5 549.2L785.0 549.7L785.5 549.6L786.0 548.4L786.5 548.0L787.0 549.5L787.5 549.1L788.0 547.7L788.5 548.9L789.0 548.3L789.5 548.3L790.0 548.2L790.5 547.8L791.0 547.5L791.5 548.0L792.0 548.1L792.5 549.3L793.0 547.6L793.5 549.3L794.0 547.8L794.5 548.0L795.0 548.9L795.5 548.9L796.0 548.1L796.5 547.3L797.0 548.2L797.5 547.9L798.0 549.0L798.5 547.5L799.0 547.8L799.5 548.9L800.0 547.1L800.5 547.9L801.0 548.6L801.5 548.5L802.0 547.1L802.5 547.0L803.0 547.0L803.5 548.7L804.0 547.4L804.5 548.3L805.0 548.6L805.5 547.5L806.0 547.3L806.5 548.6L807.0 547.9L807.5 547.2L808.0 548.1L808.5 547.2L809.0 547.1L809.5 546.6L810.0 548.0L810.5 548.3L811.0 547.7L811.5 548.3L812.0 546.5L812.5 546.9L813.0 547.3L813.5 548.2L814.0 548.2L814.5 547.0L815.0 546.7L815.5 547.1L816.0 547.2L816.5 548.0L817.0 546.5L817.5 547.7L818.0 547.6L818.5 547.7L819.0 547.6L819.5 547.2L820.0 546.7L820.5 546.6L821.0 546.7L821.5 547.5L822.0 546.1L822.5 546.3L823.0 547.4L823.5 546.4L824.0 546.0L824.5 545.9L825.0 547.0L825.5 546.5L826.0 547.8L826.5 547.6L827.0 547.8L827.5 546.3L828.0 545.9L828.5 545.9L829.0 546.7L829.5 547.1L830.0 546.6L830.5 546.2L831.0 546.5L831.5 546.9L832.0 547.0L832.5 547.1L833.0 547.3L833.5 546.9L834.0 545.8L834.5 547.3L835.0 546.2L835.5 546.7L836.0 546.3L836.5 547.0L837.0 545.9L837.5 546.0L838.0 546.0L838.5 545.8L839.0 547.2L839.5 546.6L840.0 546.1L840.5 546.2L841.0 547.4L841.5 546.4L842.0 545.9L842.5 547.0L843.0 546.7L843.5 547.3L844.0 545.6L844.5 546.3L845.0 547.0L845.5 547.0L846.0 547.1L846.5 545.4L847.0 545.9L847.5 545.5L848.0 545.6L848.5 547.2L849.0 546.4L849.5 547.1L850.0 545.9L850.5 546.9L851.0 546.1L851.5 545.7L852.0 546.7L852.5 547.0L853.0 545.3L853.5 546.3L854.0 546.3L854.5 545.5L855.0 545.8L855.5 545.4L856.0 545.5L856.5 545.6L857.0 546.2L857.5 546.3L858.0 545.4L858.5 545.0L859.0 545.6L859.5 546.3L860.0 545.3L860.5 545.6L861.0 545.3L861.5 546.5L862.0 546.0L862.5 545.0L863.0 545.1L863.5 545.7L864.0 546.0L864.5 546.1L865.0 545.0L865.5 545.2L866.0 546.2L866.5 545.6L867.0 545.4L867.5 545.4L868.0 546.7L868.5 545.4L869.0 545.9L869.5 545.5L870.0 545.6L870.5 546.4L871.0 546.7L871.5 545.4L872.0 545.1L872.5 546.1L873.0 545.1L873.5 544.7L874.0 546.4L874.5 545.5L875.0 546.3L875.5 545.4L876.0 546.4L876.5 545.5L877.0 544.9L877.5 544.6L878.0 545.6L878.5 545.8L879.0 546.3L879.5 544.7L880.0 545.7L880.5 545.2L881.0 545.5L881.5 544.8L882.0 545.0L882.5 545.5L883.0 546.3L883.5 544.6L884.0 545.4L884.5 546.0L885.0 546.3L885.5 544.8L886.0 544.6L886.5 546.2L887.0 546.3L887.5 545.3L888.0 544.4L888.5 546.2L889.0 545.1L889.5 546.1L890.0 545.5L890.5 545.9L891.0 544.6L891.5 545.8L892.0 544.7L892.5 545.0L893.0 545.9" stroke="#E81010" stroke-width="2.7"/>
<path d="M68.0 547.5L68.5 546.5L69.0 546.6L69.5 546.9L70.0 547.0L70.5 546.8L71.0 546.4L71.5 546.6L72.0 547.4L72.5 547.7L73.0 546.3L73.5 547.2L74.0 547.5L74.5 546.3L75.0 547.6L75.5 546.5L76.0 547.2L76.5 547.2L77.0 547.3L77.5 546.8L78.0 547.0L78.5 547.3L79.0 547.0L79.5 547.4L80.0 547.1L80.5 547.0L81.0 546.4L81.5 547.3L82.0 547.1L82.5 546.7L83.0 547.6L83.5 547.6L84.0 547.1L84.5 546.7L85.0 547.2L85.5 546.6L86.0 546.6L86.5 547.1L87.0 546.6L87.5 547.1L88.0 547.2L88.5 546.5L89.0 547.5L89.5 546.6L90.0 547.6L90.5 547.7L91.0 547.3L91.5 546.6L92.0 547.3L92.5 547.1L93.0 548.0L93.5 546.7L94.0 547.9L94.5 548.1L95.0 547.7L95.5 547.8L96.0 546.8L96.5 548.1L97.0 547.3L97.5 548.0L98.0 548.0L98.5 546.8L99.0 547.8L99.5 548.0L100.0 546.6L100.5 547.1L101.0 547.7L101.5 546.8L102.0 547.9L102.5 546.9L103.0 547.8L103.5 546.7L104.0 547.3L104.5 548.0L105.0 546.8L105.5 546.9L106.0 547.3L106.5 547.0L107.0 546.5L107.5 546.8L108.0 546.7L108.5 548.0L109.0 547.6L109.5 547.9L110.0 546.7L110.5 547.7L111.0 546.6L111.5 547.3L112.0 547.5L112.5 547.0L113.0 547.8L113.5 547.3L114.0 547.3L114.5 547.8L115.0 546.6L115.5 548.0L116.0 547.4L116.5 547.0L117.0 547.7L117.5 546.8L118.0 548.0L118.5 547.3L119.0 546.9L119.5 547.6L120.0 547.1L120.5 546.6L121.0 547.5L121.5 546.4L122.0 547.6L122.5 546.7L123.0 547.3L123.5 547.9L124.0 547.2L124.5 547.4L125.0 546.8L125.5 546.3L126.0 546.3L126.5 546.5L127.0 547.2L127.5 546.9L128.0 547.1L128.5 547.7L129.0 546.4L129.5 546.6L130.0 547.3L130.5 546.3L131.0 546.2L131.5 546.8L132.0 546.4L132.5 546.8L133.0 546.5L133.5 547.1L134.0 547.1L134.5 546.5L135.0 547.2L135.5 546.9L136.0 546.4L136.5 547.6L137.0 546.5L137.5 546.4L138.0 546.3L138.5 547.1L139.0 547.5L139.5 547.3L140.0 546.7L140.5 546.5L141.0 546.1L141.5 547.1L142.0 547.0L142.5 546.6L143.0 547.1L143.5 546.7L144.0 547.5L144.5 547.2L145.0 546.4L145.5 547.4L146.0 546.1L146.5 546.8L147.0 546.6L147.5 546.3L148.0 546.0L148.5 547.2L149.0 546.0L149.5 546.8L150.0 547.4L150.5 546.1L151.0 546.2L151.5 546.9L152.0 546.7L152.5 546.9L153.0 547.2L153.5 546.1L154.0 546.3L154.5 546.3L155.0 545.9L155.5 547.2L156.0 547.0L156.5 546.9L157.0 545.8L157.5 547.1L158.0 546.9L158.5 546.5L159.0 546.9L159.5 546.4L160.0 546.1L160.5 545.9L161.0 546.0L161.5 545.7L162.0 546.2L162.5 546.8L163.0 546.7L163.5 547.0L164.0 546.7L164.5 546.0L165.0 546.5L165.5 546.2L166.0 546.8L166.5 546.4L167.0 545.9L167.5 546.5L168.0 547.0L168.5 545.8L169.0 546.8L169.5 545.4L170.0 545.8L170.5 545.8L171.0 546.6L171.5 546.9L172.0 546.5L172.5 545.8L173.0 546.7L173.5 545.8L174.0 545.6L174.5 546.7L175.0 546.2L175.5 546.3L176.0 546.2L176.5 546.7L177.0 545.9L177.5 546.5L178.0 546.2L178.5 546.4L179.0 545.7L179.5 546.2L180.0 545.9L180.5 545.5L181.0 545.3L181.5 545.9L182.0 545.0L182.5 546.3L183.0 545.1L183.5 544.9L184.0 545.0L184.5 546.3L185.0 545.3L185.5 545.0L186.0 544.7L186.5 544.7L187.0 545.8L187.5 545.6L188.0 545.7L188.5 545.7L189.0 544.6L189.5 545.4L190.0 545.0L190.5 545.7L191.0 545.7L191.5 545.8L192.0 544.4L192.5 545.7L193.0 545.7L193.5 545.7L194.0 544.3L194.5 544.5L195.0 544.3L195.5 544.1L196.0 545.4L196.5 545.3L197.0 544.9L197.5 545.2L198.0 544.9L198.5 544.3L199.0 543.9L199.5 543.9L200.0 544.9L200.5 544.0L201.0 544.1L201.5 544.2L202.0 543.5L202.5 543.9L203.0 543.8L203.5 544.5L204.0 543.9L204.5 543.8L205.0 544.7L205.5 544.0L206.0 544.5L206.5 544.0L207.0 543.1L207.5 543.6L208.0 543.6L208.5 544.1L209.0 543.4L209.5 543.9L210.0 543.6L210.5 543.0L211.0 544.0L211.5 542.7L212.0 543.8L212.5 542.7L213.0 542.4L213.5 542.6L214.0 543.4L214.5 543.7L215.0 542.1L215.5 542.8L216.0 542.7L216.5 543.2L217.0 542.1L217.5 542.5L218.0 542.2L218.5 542.9L219.0 541.9L219.5 542.9L220.0 541.8L220.5 541.6L221.0 542.3L221.5 541.8L222.0 541.1L222.5 541.8L223.0 540.8L223.5 541.8L224.0 541.6L224.5 541.6L225.0 541.2L225.5 540.6L226.0 540.5L226.5 540.3L227.0 541.0L227.5 539.5L228.0 540.6L228.5 539.1L229.0 539.2L229.5 539.1L230.0 539.9L230.5 539.1L231.0 538.7L231.5 539.3L232.0 538.1L232.5 538.2L233.0 538.1L233.5 538.3L234.0 538.1L234.5 537.7L235.0 537.0L235.5 536.7L236.0 536.2L236.5 537.1L237.0 536.5L237.5 536.4L238.0 535.2L238.5 535.4L239.0 535.6L239.5 535.0L240.0 534.0L240.5 534.2L241.0 534.6L241.5 533.2L242.0 532.7L242.5 532.6L243.0 532.8L243.5 532.6L244.0 531.1L244.5 530.6L245.0 530.2L245.5 529.8L246.0 529.4L246.5 528.7L247.0 528.0L247.5 527.3L248.0 526.5L248.5 525.7L249.0 524.9L249.5 524.1L250.0 523.3L250.5 522.5L251.0 521.6L251.5 520.8L252.0 520.0L252.5 519.2L253.0 518.3L253.5 517.5L254.0 516.6L254.5 515.7L255.0 514.8L255.5 513.9L256.0 513.0L256.5 512.0L257.0 511.1L257.5 510.1L258.0 509.1L258.5 508.1L259.0 507.1L259.5 506.1L260.0 505.1L260.5 504.0L261.0 503.0L261.5 501.9L262.0 500.8L262.5 499.7L263.0 498.6L263.5 497.4L264.0 496.3L264.5 495.1L265.0 493.9L265.5 492.7L266.0 491.5L266.5 490.2L267.0 489.0L267.5 487.8L268.0 486.6L268.5 485.4L269.0 484.2L269.5 483.0L270.0 481.8L270.5 480.6L271.0 479.5L271.5 478.3L272.0 477.1L272.5 475.9L273.0 474.8L273.5 473.6L274.0 472.4L274.5 471.2L275.0 470.1L275.5 468.9L276.0 467.7L276.5 466.5L277.0 465.4L277.5 464.2L278.0 463.0L278.5 461.8L279.0 460.7L279.5 459.5L280.0 458.3L280.5 457.2L281.0 456.0L281.5 454.8L282.0 453.7L282.5 452.5L283.0 451.4L283.5 450.2L284.0 449.0L284.5 447.9L285.0 446.7L285.5 445.5L286.0 444.4L286.5 443.2L287.0 442.1L287.5 440.9L288.0 439.7L288.5 438.5L289.0 437.4L289.5 436.2L290.0 435.0L290.5 433.8L291.0 432.6L291.5 431.4L292.0 430.2L292.5 429.0L293.0 427.8L293.5 426.6L294.0 425.4L294.5 424.2L295.0 423.0L295.5 421.8L296.0 420.6L296.5 419.4L297.0 418.3L297.5 417.1L298.0 415.9L298.5 414.7L299.0 413.6L299.5 412.4L300.0 411.2L300.5 410.1L301.0 408.9L301.5 407.7L302.0 406.6L302.5 405.4L303.0 404.3L303.5 403.1L304.0 401.9L304.5 400.8L305.0 399.6L305.5 398.4L306.0 397.3L306.5 396.1L307.0 394.9L307.5 393.7L308.0 392.6L308.5 391.4L309.0 390.2L309.5 389.0L310.0 387.8L310.5 386.6L311.0 385.4L311.5 384.2L312.0 383.0L312.5 381.8L313.0 380.6L313.5 379.3L314.0 378.1L314.5 376.9L315.0 375.6L315.5 374.4L316.0 373.1L316.5 371.9L317.0 370.6L317.5 369.3L318.0 368.0L318.5 366.7L319.0 365.4L319.5 364.1L320.0 362.8L320.5 361.5L321.0 360.1L321.5 358.8L322.0 357.4L322.5 356.1L323.0 354.7L323.5 353.3L324.0 351.9L324.5 350.5L325.0 349.1L325.5 347.7L326.0 346.2L326.5 344.8L327.0 343.3L327.5 341.8L328.0 340.3L328.5 338.8L329.0 337.3L329.5 335.8L330.0 334.2L330.5 332.7L331.0 331.1L331.5 329.5L332.0 327.9L332.5 326.3L333.0 324.6L333.5 322.9L334.0 321.2L334.5 319.5L335.0 317.8L335.5 316.0L336.0 314.3L336.5 312.5L337.0 310.7L337.5 308.8L338.0 307.0L338.5 305.1L339.0 303.3L339.5 301.4L340.0 299.5L340.5 297.6L341.0 295.6L341.5 293.7L342.0 291.7L342.5 289.7L343.0 287.8L343.5 285.8L344.0 283.7L344.5 281.7L345.0 279.7L345.5 277.6L346.0 275.5L346.5 273.5L347.0 271.4L347.5 269.3L348.0 267.2L348.5 265.1L349.0 262.9L349.5 260.8L350.0 258.6L350.5 256.5L351.0 254.3L351.5 252.1L352.0 250.0L352.5 247.8L353.0 245.6L353.5 243.4L354.0 241.1L354.5 238.9L355.0 236.7L355.5 234.4L356.0 232.1L356.5 229.8L357.0 227.4L357.5 225.0L358.0 222.5L358.5 220.0L359.0 217.5L359.5 215.0L360.0 212.4L360.5 209.9L361.0 207.3L361.5 204.8L362.0 202.2L362.5 199.7L363.0 197.1L363.5 194.5L364.0 191.8L364.5 189.1L365.0 186.3L365.5 183.6L366.0 180.9L366.5 178.3L367.0 175.8L367.5 173.3L368.0 171.0L368.5 168.9L369.0 166.8L369.5 164.8L370.0 162.8L370.5 160.9L371.0 159.1L371.5 157.5L372.0 156.0L372.5 154.6L373.0 153.4L373.5 152.2L374.0 151.1L374.5 150.1L375.0 149.2L375.5 148.6L376.0 148.1L376.5 147.7L377.0 147.3L377.5 147.0L378.0 146.7L378.5 146.4L379.0 146.1L379.5 145.9L380.0 145.7L380.5 145.5L381.0 145.2L381.5 145.0L382.0 144.8L382.5 144.6L383.0 144.4L383.5 144.3L384.0 144.1L384.5 144.0L385.0 143.8L385.5 143.7L386.0 143.6L386.5 143.5L387.0 143.4L387.5 143.3L388.0 143.2L388.5 143.1L389.0 143.1L389.5 143.0L390.0 142.9L390.5 142.8L391.0 142.8L391.5 142.7L392.0 142.6L392.5 142.6L393.0 142.5L393.5 142.4L394.0 142.4L394.5 142.3L395.0 142.2L395.5 142.2L396.0 142.1L396.5 142.1L397.0 142.0L397.5 141.9L398.0 141.9L398.5 141.9L399.0 141.8L399.5 141.8L400.0 141.7L400.5 141.7L401.0 141.7L401.5 141.6L402.0 141.6L402.5 141.6L403.0 141.5L403.5 141.5L404.0 141.5L404.5 141.4L405.0 141.4L405.5 141.4L406.0 141.3L406.5 141.3L407.0 141.3L407.5 141.3L408.0 141.2L408.5 141.2L409.0 141.2L409.5 141.1L410.0 141.1L410.5 141.1L411.0 141.1L411.5 141.1L412.0 141.0L412.5 141.0L413.0 141.0L413.5 141.0L414.0 140.9L414.5 140.9L415.0 140.9L415.5 140.9L416.0 140.9L416.5 140.8L417.0 140.8L417.5 140.8L418.0 140.8L418.5 140.8L419.0 140.8L419.5 140.7L420.0 140.7L420.5 140.7L421.0 140.7L421.5 140.7L422.0 140.7L422.5 140.7L423.0 140.6L423.5 140.6L424.0 140.6L424.5 140.6L425.0 140.6L425.5 140.6L426.0 140.6L426.5 140.5L427.0 140.5L427.5 140.5L428.0 140.5L428.5 140.5L429.0 140.5L429.5 140.5L430.0 140.5L430.5 140.4L431.0 140.4L431.5 140.4L432.0 140.4L432.5 140.4L433.0 140.4L433.5 140.4L434.0 140.4L434.5 140.4L435.0 140.4L435.5 140.4L436.0 140.3L436.5 140.3L437.0 140.3L437.5 140.3L438.0 140.3L438.5 140.3L439.0 140.3L439.5 140.3L440.0 140.3L440.5 140.3L441.0 140.3L441.5 140.3L442.0 140.3L442.5 140.3L443.0 140.3L443.5 140.3L444.0 140.3L444.5 140.3L445.0 140.3L445.5 140.3L446.0 140.3L446.5 140.3L447.0 140.3L447.5 140.3L448.0 140.3L448.5 140.3L449.0 140.3L449.5 140.3L450.0 140.3L450.5 140.4L451.0 140.4L451.5 140.4L452.0 140.4L452.5 140.4L453.0 140.4L453.5 140.4L454.0 140.4L454.5 140.4L455.0 140.4L455.5 140.4L456.0 140.4L456.5 140.4L457.0 140.4L457.5 140.5L458.0 140.5L458.5 140.5L459.0 140.5L459.5 140.5L460.0 140.5L460.5 140.5L461.0 140.5L461.5 140.5L462.0 140.5L462.5 140.6L463.0 140.6L463.5 140.6L464.0 140.6L464.5 140.6L465.0 140.6L465.5 140.7L466.0 140.7L466.5 140.7L467.0 140.7L467.5 140.7L468.0 140.8L468.5 140.8L469.0 140.8L469.5 140.8L470.0 140.9L470.5 140.9L471.0 140.9L471.5 140.9L472.0 141.0L472.5 141.0L473.0 141.0L473.5 141.0L474.0 141.1L474.5 141.1L475.0 141.1L475.5 141.2L476.0 141.2L476.5 141.2L477.0 141.2L477.5 141.3L478.0 141.3L478.5 141.3L479.0 141.4L479.5 141.4L480.0 141.4L480.5 141.5L481.0 141.5L481.5 141.5L482.0 141.6L482.5 141.6L483.0 141.6L483.5 141.7L484.0 141.7L484.5 141.8L485.0 141.8L485.5 141.8L486.0 141.9L486.5 141.9L487.0 142.0L487.5 142.0L488.0 142.1L488.5 142.1L489.0 142.2L489.5 142.2L490.0 142.3L490.5 142.3L491.0 142.4L491.5 142.4L492.0 142.5L492.5 142.5L493.0 142.6L493.5 142.6L494.0 142.7L494.5 142.8L495.0 142.8L495.5 142.9L496.0 142.9L496.5 143.0L497.0 143.1L497.5 143.1L498.0 143.2L498.5 143.3L499.0 143.3L499.5 143.4L500.0 143.5L500.5 143.6L501.0 143.6L501.5 143.7L502.0 143.8L502.5 143.9L503.0 144.0L503.5 144.1L504.0 144.2L504.5 144.3L505.0 144.3L505.5 144.4L506.0 144.5L506.5 144.6L507.0 144.7L507.5 144.9L508.0 145.0L508.5 145.1L509.0 145.2L509.5 145.3L510.0 145.4L510.5 145.5L511.0 145.6L511.5 145.7L512.0 145.9L512.5 146.0L513.0 146.1L513.5 146.2L514.0 146.4L514.5 146.5L515.0 146.6L515.5 146.8L516.0 146.9L516.5 147.1L517.0 147.2L517.5 147.4L518.0 147.6L518.5 147.8L519.0 148.0L519.5 148.2L520.0 148.5L520.5 148.7L521.0 149.0L521.5 149.4L522.0 149.7L522.5 150.1L523.0 150.4L523.5 150.8L524.0 151.2L524.5 151.6L525.0 152.1L525.5 152.5L526.0 152.9L526.5 153.4L527.0 153.9L527.5 154.3L528.0 154.8L528.5 155.3L529.0 155.9L529.5 156.5L530.0 157.1L530.5 157.7L531.0 158.3L531.5 158.8L532.0 159.3L532.5 159.7L533.0 160.1L533.5 160.5L534.0 160.9L534.5 161.4L535.0 161.9L535.5 162.4L536.0 163.1L536.5 163.9L537.0 164.9L537.5 167.0L538.0 169.7L538.5 171.7L539.0 173.4L539.5 175.4L540.0 177.7L540.5 180.0L541.0 182.5L541.5 185.3L542.0 188.4L542.5 192.0L543.0 196.3L543.5 201.1L544.0 206.2L544.5 211.6L545.0 217.0L545.5 222.4L546.0 227.5L546.5 232.4L547.0 236.7L547.5 240.7L548.0 244.7L548.5 248.5L549.0 252.4L549.5 256.1L550.0 259.8L550.5 263.4L551.0 267.0L551.5 270.5L552.0 274.0L552.5 277.4L553.0 280.8L553.5 284.1L554.0 287.4L554.5 290.6L555.0 293.8L555.5 296.9L556.0 300.1L556.5 303.2L557.0 306.2L557.5 309.3L558.0 312.3L558.5 315.3L559.0 318.3L559.5 321.2L560.0 324.2L560.5 327.1L561.0 330.0L561.5 332.9L562.0 335.8L562.5 338.7L563.0 341.5L563.5 344.3L564.0 347.1L564.5 349.9L565.0 352.7L565.5 355.4L566.0 358.1L566.5 360.8L567.0 363.5L567.5 366.2L568.0 368.8L568.5 371.4L569.0 374.0L569.5 376.6L570.0 379.2L570.5 381.7L571.0 384.3L571.5 386.8L572.0 389.3L572.5 391.8L573.0 394.3L573.5 396.7L574.0 399.2L574.5 401.6L575.0 404.0L575.5 406.4L576.0 408.8L576.5 411.2L577.0 413.6L577.5 415.9L578.0 418.3L578.5 420.6L579.0 423.0L579.5 425.3L580.0 427.6L580.5 429.9L581.0 432.1L581.5 434.2L582.0 436.3L582.5 438.3L583.0 440.2L583.5 442.1L584.0 444.1L584.5 446.0L585.0 448.0L585.5 450.0L586.0 452.0L586.5 454.2L587.0 456.4L587.5 458.8L588.0 461.3L588.5 463.9L589.0 466.7L589.5 469.8L590.0 473.1L590.5 476.7L591.0 480.4L591.5 484.4L592.0 488.5L592.5 492.8L593.0 497.8L593.5 503.5L594.0 509.3L594.5 515.1L595.0 520.4L595.5 524.9L596.0 528.3L596.5 531.3L597.0 533.5L597.5 536.3L598.0 538.4L598.5 541.6L599.0 542.8L599.5 543.1L600.0 545.5L600.5 545.0L601.0 546.0L601.5 547.3L602.0 547.2L602.5 547.3L603.0 546.9L603.5 546.5L604.0 547.0L604.5 546.0L605.0 546.0L605.5 546.0L606.0 545.2L606.5 545.5L607.0 545.7L607.5 545.2L608.0 544.4L608.5 544.2L609.0 543.5L609.5 542.5L610.0 542.9L610.5 542.2L611.0 542.4L611.5 542.3L612.0 541.3L612.5 541.2L613.0 541.2L613.5 540.4L614.0 539.8L614.5 540.3L615.0 540.3L615.5 539.9L616.0 539.5L616.5 539.5L617.0 539.1L617.5 538.9L618.0 538.4L618.5 538.1L619.0 538.5L619.5 537.5L620.0 537.9L620.5 538.4L621.0 538.2L621.5 537.9L622.0 537.2L622.5 537.4L623.0 537.4L623.5 537.6L624.0 537.2L624.5 537.6L625.0 537.9L625.5 536.7L626.0 537.5L626.5 537.6L627.0 537.0L627.5 537.2L628.0 538.0L628.5 536.6L629.0 537.4L629.5 536.9L630.0 537.9L630.5 538.3L631.0 537.7L631.5 537.1L632.0 538.0L632.5 538.0L633.0 538.4L633.5 538.2L634.0 538.6L634.5 539.0L635.0 538.6L635.5 538.6L636.0 539.6L636.5 538.5L637.0 539.4L637.5 539.1L638.0 539.9L638.5 539.0L639.0 540.5L639.5 539.6L640.0 539.3L640.5 539.8L641.0 540.1L641.5 539.6L642.0 540.4L642.5 540.5L643.0 541.0L643.5 540.6L644.0 540.6L644.5 540.6L645.0 541.5L645.5 542.0L646.0 541.4L646.5 541.0L647.0 542.1L647.5 541.5L648.0 541.4L648.5 541.3L649.0 542.5L649.5 542.6L650.0 542.5L650.5 542.3L651.0 542.6L651.5 542.2L652.0 543.5L652.5 542.6L653.0 543.2L653.5 543.6L654.0 543.7L654.5 543.2L655.0 543.1L655.5 543.6L656.0 543.0L656.5 544.3L657.0 543.6L657.5 544.5L658.0 543.7L658.5 544.0L659.0 543.9L659.5 544.3L660.0 544.0L660.5 543.8L661.0 545.1L661.5 544.5L662.0 544.6L662.5 544.8L663.0 545.2L663.5 545.2L664.0 545.7L664.5 545.8L665.0 545.5L665.5 546.5L666.0 546.5L666.5 545.3L667.0 546.7L667.5 546.9L668.0 546.9L668.5 545.9L669.0 547.2L669.5 547.0L670.0 546.1L670.5 546.2L671.0 547.8L671.5 547.5L672.0 546.9L672.5 546.8L673.0 547.0L673.5 547.2L674.0 548.2L674.5 547.6L675.0 547.4L675.5 548.8L676.0 548.7L676.5 547.8L677.0 549.1L677.5 548.7L678.0 549.1L678.5 549.0L679.0 549.5L679.5 549.5L680.0 549.7L680.5 548.8L681.0 549.7L681.5 549.6L682.0 550.0L682.5 549.6L683.0 550.5L683.5 550.0L684.0 549.7L684.5 549.7L685.0 549.7L685.5 550.3L686.0 549.7L686.5 550.4L687.0 549.9L687.5 550.6L688.0 550.6L688.5 550.7L689.0 551.2L689.5 549.9L690.0 551.3L690.5 550.7L691.0 550.9L691.5 551.1L692.0 551.4L692.5 550.7L693.0 550.8L693.5 551.6L694.0 550.3L694.5 551.2L695.0 551.2L695.5 550.3L696.0 551.2L696.5 551.3L697.0 551.8L697.5 550.8L698.0 551.9L698.5 551.2L699.0 551.1L699.5 551.8L700.0 550.5L700.5 551.6L701.0 551.4L701.5 551.0L702.0 551.9L702.5 551.1L703.0 551.3L703.5 551.4L704.0 551.8L704.5 550.9L705.0 551.3L705.5 551.3L706.0 551.5L706.5 551.9L707.0 551.1L707.5 552.0L708.0 551.3L708.5 551.5L709.0 551.1L709.5 551.5L710.0 552.3L710.5 551.8L711.0 552.0L711.5 551.3L712.0 551.2L712.5 551.2L713.0 551.7L713.5 551.8L714.0 552.0L714.5 550.8L715.0 551.9L715.5 552.2L716.0 551.7L716.5 550.9L717.0 551.3L717.5 550.8L718.0 551.1L718.5 552.3L719.0 551.8L719.5 551.9L720.0 552.1L720.5 552.3L721.0 551.8L721.5 551.8L722.0 551.8L722.5 551.9L723.0 551.8L723.5 551.9L724.0 551.1L724.5 551.9L725.0 551.5L725.5 552.0L726.0 551.0L726.5 551.1L727.0 550.8L727.5 552.0L728.0 552.2L728.5 551.8L729.0 551.4L729.5 552.1L730.0 552.0L730.5 551.7L731.0 551.2L731.5 551.2L732.0 551.4L732.5 551.3L733.0 551.4L733.5 551.8L734.0 552.2L734.5 550.8L735.0 551.7L735.5 550.8L736.0 550.9L736.5 552.0L737.0 551.6L737.5 552.2L738.0 551.4L738.5 550.7L739.0 551.3L739.5 551.7L740.0 552.2L740.5 552.3L741.0 551.5L741.5 551.3L742.0 550.8L742.5 551.7L743.0 551.0L743.5 550.9L744.0 550.7L744.5 550.7L745.0 551.8L745.5 550.8L746.0 552.2L746.5 550.8L747.0 552.0L747.5 550.8L748.0 550.7L748.5 551.8L749.0 551.0L749.5 551.8L750.0 550.9L750.5 550.7L751.0 551.8L751.5 551.7L752.0 552.0L752.5 551.7L753.0 550.7L753.5 551.6L754.0 551.7L754.5 551.3L755.0 552.0L755.5 551.0L756.0 552.1L756.5 551.7L757.0 550.6L757.5 550.6L758.0 551.6L758.5 551.8L759.0 550.6L759.5 551.0L760.0 551.7L760.5 550.8L761.0 551.9L761.5 551.3L762.0 550.6L762.5 551.1L763.0 551.4L763.5 551.2L764.0 551.5L764.5 550.7L765.0 551.7L765.5 551.0L766.0 551.5L766.5 551.4L767.0 551.1L767.5 551.0L768.0 551.7L768.5 551.9L769.0 551.6L769.5 551.3L770.0 550.8L770.5 550.5L771.0 551.9L771.5 551.5L772.0 551.7L772.5 550.9L773.0 551.3L773.5 551.9L774.0 551.6L774.5 551.3L775.0 550.8L775.5 551.0L776.0 551.7L776.5 550.9L777.0 551.4L777.5 551.2L778.0 551.7L778.5 551.5L779.0 550.7L779.5 550.2L780.0 550.6L780.5 550.9L781.0 551.1L781.5 551.5L782.0 551.6L782.5 550.2L783.0 551.5L783.5 551.4L784.0 551.5L784.5 551.0L785.0 550.6L785.5 551.5L786.0 551.4L786.5 551.2L787.0 551.5L787.5 550.6L788.0 550.2L788.5 550.9L789.0 551.3L789.5 550.3L790.0 551.2L790.5 551.5L791.0 550.4L791.5 551.0L792.0 551.1L792.5 550.7L793.0 550.3L793.5 550.4L794.0 551.1L794.5 551.2L795.0 550.6L795.5 550.0L796.0 551.2L796.5 551.1L797.0 550.2L797.5 550.8L798.0 551.3L798.5 551.3L799.0 550.7L799.5 550.6L800.0 550.7L800.5 550.1L801.0 550.1L801.5 550.1L802.0 550.9L802.5 550.3L803.0 550.6L803.5 550.4L804.0 550.5L804.5 549.9L805.0 549.7L805.5 551.2L806.0 550.2L806.5 549.8L807.0 550.6L807.5 550.8L808.0 549.8L808.5 550.5L809.0 550.1L809.5 550.3L810.0 549.5L810.5 549.5L811.0 551.0L811.5 550.8L812.0 550.2L812.5 550.3L813.0 549.8L813.5 550.6L814.0 550.0L814.5 550.9L815.0 550.6L815.5 550.6L816.0 550.8L816.5 549.7L817.0 549.3L817.5 549.6L818.0 549.5L818.5 549.4L819.0 549.3L819.5 550.1L820.0 550.6L820.5 549.9L821.0 550.7L821.5 550.6L822.0 549.3L822.5 550.1L823.0 549.8L823.5 549.3L824.0 550.7L824.5 549.5L825.0 550.0L825.5 550.1L826.0 550.6L826.5 550.1L827.0 549.7L827.5 549.8L828.0 549.3L828.5 550.6L829.0 550.6L829.5 549.4L830.0 549.1L830.5 549.4L831.0 549.6L831.5 550.4L832.0 550.4L832.5 550.3L833.0 549.0L833.5 550.2L834.0 550.1L834.5 550.0L835.0 550.5L835.5 549.0L836.0 549.2L836.5 550.1L837.0 550.4L837.5 550.0L838.0 549.4L838.5 549.8L839.0 550.1L839.5 549.0L840.0 549.4L840.5 549.3L841.0 549.0L841.5 549.6L842.0 549.1L842.5 549.2L843.0 549.1L843.5 549.9L844.0 548.8L844.5 549.9L845.0 549.1L845.5 548.8L846.0 550.3L846.5 549.1L847.0 550.3L847.5 550.1L848.0 550.2L848.5 549.0L849.0 549.5L849.5 548.9L850.0 550.2L850.5 550.1L851.0 549.7L851.5 549.4L852.0 549.2L852.5 550.0L853.0 549.5L853.5 549.7L854.0 548.9L854.5 549.0L855.0 548.8L855.5 549.8L856.0 549.5L856.5 548.9L857.0 550.0L857.5 549.1L858.0 549.3L858.5 548.9L859.0 549.0L859.5 549.9L860.0 549.1L860.5 548.9L861.0 549.4L861.5 549.1L862.0 550.0L862.5 548.7L863.0 550.1L863.5 548.6L864.0 550.0L864.5 549.6L865.0 548.9L865.5 549.3L866.0 549.0L866.5 548.9L867.0 548.8L867.5 549.1L868.0 550.1L868.5 550.1L869.0 550.0L869.5 548.6L870.0 548.9L870.5 549.9L871.0 548.6L871.5 549.6L872.0 548.9L872.5 550.0L873.0 548.5L873.5 549.7L874.0 549.0L874.5 548.6L875.0 548.4L875.5 549.7L876.0 549.2L876.5 548.7L877.0 549.1L877.5 549.8L878.0 548.7L878.5 549.3L879.0 548.6L879.5 548.6L880.0 549.6L880.5 549.5L881.0 548.7L881.5 548.5L882.0 548.5L882.5 549.3L883.0 549.1L883.5 548.8L884.0 548.6L884.5 549.3L885.0 549.4L885.5 549.6L886.0 549.2L886.5 548.6L887.0 548.4L887.5 549.4L888.0 548.9L888.5 549.4L889.0 548.3L889.5 549.5L890.0 548.8L890.5 549.6L891.0 549.6L891.5 549.0L892.0 548.2L892.5 549.7L893.0 549.0" stroke="#118011" stroke-width="2.7"/>
</g>
<rect x="368" y="150" width="8" height="8" fill="#000" />
<rect x="369" y="151" width="6" height="6" fill="#22EE22" />
<text x="377" y="159.6" font-size="11" fill="#000" textLength="106" lengthAdjust="spacingAndGlyphs" stroke="#000" stroke-width="0.2" >11.057.166Hz, -5.5dB</text>
<rect x="524" y="150" width="8" height="8" fill="#000" />
<rect x="525" y="151" width="6" height="6" fill="#22EE22" />
<text x="533" y="159.6" font-size="11" fill="#000" textLength="106" lengthAdjust="spacingAndGlyphs" stroke="#000" stroke-width="0.2" >11.059.810Hz, -5.5dB</text>
<rect x="351" y="232" width="8" height="8" fill="#000" />
<rect x="352" y="233" width="6" height="6" fill="#22EE22" />
<text x="360" y="241.6" font-size="11" fill="#000" textLength="112" lengthAdjust="spacingAndGlyphs" stroke="#000" stroke-width="0.2" >11.056.872Hz, -22.5dB</text>
<rect x="543" y="232" width="8" height="8" fill="#000" />
<rect x="544" y="233" width="6" height="6" fill="#22EE22" />
<text x="552" y="241.6" font-size="11" fill="#000" textLength="112" lengthAdjust="spacingAndGlyphs" stroke="#000" stroke-width="0.2" >11.060.128Hz, -22.5dB</text>
<rect x="326" y="329" width="8" height="8" fill="#000" />
<rect x="327" y="330" width="6" height="6" fill="#22EE22" />
<text x="335" y="338.6" font-size="11" fill="#000" textLength="112" lengthAdjust="spacingAndGlyphs" stroke="#000" stroke-width="0.2" >11.056.453Hz, -42.5dB</text>
<rect x="558" y="329" width="8" height="8" fill="#000" />
<rect x="559" y="330" width="6" height="6" fill="#22EE22" />
<text x="567" y="338.6" font-size="11" fill="#000" textLength="112" lengthAdjust="spacingAndGlyphs" stroke="#000" stroke-width="0.2" >11.060.375Hz, -42.5dB</text>
<rect x="289" y="425" width="8" height="8" fill="#000" />
<rect x="290" y="426" width="6" height="6" fill="#22EE22" />
<text x="298" y="434.6" font-size="11" fill="#000" textLength="112" lengthAdjust="spacingAndGlyphs" stroke="#000" stroke-width="0.2" >11.055.810Hz, -62.5dB</text>
<rect x="576" y="425" width="8" height="8" fill="#000" />
<rect x="577" y="426" width="6" height="6" fill="#22EE22" />
<text x="585" y="434.6" font-size="11" fill="#000" textLength="112" lengthAdjust="spacingAndGlyphs" stroke="#000" stroke-width="0.2" >11.060.694Hz, -62.5dB</text>
<g shape-rendering="auto">
<text x="157.5" y="146" font-size="16" font-weight="bold" fill="#1C94D4" textLength="195" lengthAdjust="spacingAndGlyphs" >Опора 11,057 ровно --&gt;</text>
</g>
<rect x="361" y="110" width="3" height="443" fill="#1C94D4" />
<rect x="759" y="97" width="171" height="22" fill="#D4D0C8" />
<rect x="759" y="97" width="170" height="1" fill="#808080" />
<rect x="759" y="97" width="1" height="21" fill="#808080" />
<rect x="759" y="118" width="171" height="1" fill="#FFFFFF" />
<rect x="929" y="97" width="1" height="22" fill="#FFFFFF" />
<text x="926" y="112.6" font-size="13" font-weight="bold" text-anchor="end" fill="#0A246A" textLength="131" lengthAdjust="spacingAndGlyphs" >11.066.068Hz, 1.3dB</text>
<rect x="716" y="126" width="177" height="243" fill="#D4D0C8" />
<rect x="716" y="131" width="176" height="1" fill="#808080" />
<rect x="716" y="131" width="1" height="237" fill="#808080" />
<rect x="716" y="367" width="176" height="1" fill="#808080" />
<rect x="891" y="131" width="1" height="237" fill="#808080" />
<rect x="717" y="132" width="174" height="1" fill="#FFFFFF" />
<rect x="717" y="132" width="1" height="235" fill="#FFFFFF" />
<rect x="716" y="368" width="177" height="1" fill="#FFFFFF" />
<rect x="892" y="131" width="1" height="238" fill="#FFFFFF" />
<rect x="724" y="128" width="44" height="8" fill="#D4D0C8" />
<text x="726.5" y="137" font-size="11" fill="#000" textLength="37.5" lengthAdjust="spacingAndGlyphs" stroke="#000" stroke-width="0.2" >Statistic</text>
<rect x="866" y="128" width="19" height="17" fill="#D4D0C8" />
<rect x="866" y="128" width="18" height="1" fill="#FFFFFF" />
<rect x="866" y="128" width="1" height="16" fill="#FFFFFF" />
<rect x="866" y="144" width="19" height="1" fill="#404040" />
<rect x="884" y="128" width="1" height="17" fill="#404040" />
<rect x="867" y="143" width="17" height="1" fill="#808080" />
<rect x="883" y="129" width="1" height="15" fill="#808080" />
<text x="875" y="140" font-size="11" text-anchor="middle" fill="#000" stroke="#000" stroke-width="0.2" >x</text>
<text x="731.5" y="153.5" font-size="11" fill="#000" textLength="86.5" lengthAdjust="spacingAndGlyphs" stroke="#000" stroke-width="0.2" >3dB BW: 2.644 Hz</text>
<text x="731.5" y="166.53" font-size="11" fill="#000" textLength="86.5" lengthAdjust="spacingAndGlyphs" stroke="#000" stroke-width="0.2" >6dB BW: 2.878 Hz</text>
<text x="731.5" y="179.56" font-size="11" fill="#000" textLength="66.3" lengthAdjust="spacingAndGlyphs" stroke="#000" stroke-width="0.2" >Ripple: 1.4 dB</text>
<text x="731.5" y="192.59" font-size="11" fill="#000" textLength="140" lengthAdjust="spacingAndGlyphs" stroke="#000" stroke-width="0.2" >3dB BW start: 11.057.166 Hz</text>
<text x="731.5" y="205.62" font-size="11" fill="#000" textLength="135.3" lengthAdjust="spacingAndGlyphs" stroke="#000" stroke-width="0.2" >3dB BW end: 11.059.810 Hz</text>
<text x="731.5" y="218.64999999999998" font-size="11" fill="#000" textLength="148.3" lengthAdjust="spacingAndGlyphs" stroke="#000" stroke-width="0.2" >3dB BW center: 11.058.488 Hz</text>
<text x="731.5" y="231.68" font-size="11" fill="#000" textLength="140" lengthAdjust="spacingAndGlyphs" stroke="#000" stroke-width="0.2" >6dB BW start: 11.057.097 Hz</text>
<text x="731.5" y="244.70999999999998" font-size="11" fill="#000" textLength="135.3" lengthAdjust="spacingAndGlyphs" stroke="#000" stroke-width="0.2" >6dB BW end: 11.059.975 Hz</text>
<text x="731.5" y="257.74" font-size="11" fill="#000" textLength="148.3" lengthAdjust="spacingAndGlyphs" stroke="#000" stroke-width="0.2" >6dB BW center: 11.058.536 Hz</text>
<text x="731.5" y="270.77" font-size="11" fill="#000" textLength="92.3" lengthAdjust="spacingAndGlyphs" stroke="#000" stroke-width="0.2" >20dB BW: 3.256 Hz</text>
<text x="731.5" y="283.79999999999995" font-size="11" fill="#000" textLength="120.3" lengthAdjust="spacingAndGlyphs" stroke="#000" stroke-width="0.2" >20dB shape factor: 1:1.2</text>
<text x="731.5" y="296.83" font-size="11" fill="#000" textLength="92.3" lengthAdjust="spacingAndGlyphs" stroke="#000" stroke-width="0.2" >40dB BW: 3.923 Hz</text>
<text x="731.5" y="309.86" font-size="11" fill="#000" textLength="120.3" lengthAdjust="spacingAndGlyphs" stroke="#000" stroke-width="0.2" >40dB shape factor: 1:1.5</text>
<text x="731.5" y="322.89" font-size="11" fill="#000" textLength="92.3" lengthAdjust="spacingAndGlyphs" stroke="#000" stroke-width="0.2" >60dB BW: 4.884 Hz</text>
<text x="731.5" y="335.91999999999996" font-size="11" fill="#000" textLength="120.3" lengthAdjust="spacingAndGlyphs" stroke="#000" stroke-width="0.2" >60dB shape factor: 1:1.8</text>
<rect x="900" y="128" width="25" height="25" fill="#D4D0C8" />
<rect x="900" y="128" width="24" height="1" fill="#FFFFFF" />
<rect x="900" y="128" width="1" height="24" fill="#FFFFFF" />
<rect x="900" y="152" width="25" height="1" fill="#404040" />
<rect x="924" y="128" width="1" height="25" fill="#404040" />
<rect x="901" y="151" width="23" height="1" fill="#808080" />
<rect x="923" y="129" width="1" height="23" fill="#808080" />
<g shape-rendering="auto">
<g transform="translate(906,133.5)"><circle cx="5.5" cy="5.5" r="4.8" fill="#D6E6F8" stroke="#9CBCE8" stroke-width="1.3"/><path d="M9.6 9.6l4 4" stroke="#C88040" stroke-width="3.2" stroke-linecap="round"/></g>
</g>
<rect x="900" y="159" width="25" height="25" fill="#D4D0C8" />
<rect x="900" y="159" width="24" height="1" fill="#FFFFFF" />
<rect x="900" y="159" width="1" height="24" fill="#FFFFFF" />
<rect x="900" y="183" width="25" height="1" fill="#404040" />
<rect x="924" y="159" width="1" height="25" fill="#404040" />
<rect x="901" y="182" width="23" height="1" fill="#808080" />
<rect x="923" y="160" width="1" height="23" fill="#808080" />
<g shape-rendering="auto">
<g transform="translate(905.5,165)"><rect x="0" y="0" width="16" height="16" fill="#fff"/><g fill="#62B462" stroke="#4C9C4C" stroke-width="0.5"><path d="M0.500 0.500h5.500l-1.500 1.500 2.300 2.300-2.500 2.500-2.300-2.300-1.500 1.500z"/><path d="M15.500 0.500v5.500l-1.500-1.500-2.300 2.300-2.500-2.500 2.300-2.300-1.500-1.500z"/><path d="M0.500 15.500v-5.500l1.500 1.500 2.300-2.300 2.500 2.500-2.300 2.300 1.500 1.500z"/><path d="M15.500 15.500h-5.500l1.500-1.500-2.300-2.300 2.500-2.500 2.300 2.300 1.500-1.500z"/></g></g>
</g>
<rect x="900" y="190" width="25" height="25" fill="#D4D0C8" />
<rect x="900" y="190" width="24" height="1" fill="#FFFFFF" />
<rect x="900" y="190" width="1" height="24" fill="#FFFFFF" />
<rect x="900" y="214" width="25" height="1" fill="#404040" />
<rect x="924" y="190" width="1" height="25" fill="#404040" />
<rect x="901" y="213" width="23" height="1" fill="#808080" />
<rect x="923" y="191" width="1" height="23" fill="#808080" />
<g shape-rendering="auto">
<g transform="translate(909.5,197)"><path d="M4 0l4 5h-2.200v5h2.200l-4 5-4-5h2.200v-5h-2.200z" fill="#68C070" stroke="#2C8C3C" stroke-width="1"/></g>
</g>
<rect x="900" y="238" width="25" height="25" fill="#D4D0C8" />
<rect x="900" y="238" width="24" height="1" fill="#FFFFFF" />
<rect x="900" y="238" width="1" height="24" fill="#FFFFFF" />
<rect x="900" y="262" width="25" height="1" fill="#404040" />
<rect x="924" y="238" width="1" height="25" fill="#404040" />
<rect x="901" y="261" width="23" height="1" fill="#808080" />
<rect x="923" y="239" width="1" height="23" fill="#808080" />
<g shape-rendering="auto">
<g transform="translate(905,244.5)"><path d="M0.500 0l5 4v10h-5z" fill="#2C5CB0"/><path d="M0.500 14.500h15" stroke="#2C5CB0" stroke-width="1.4"/><path d="M2 11c2-9 8-11 12-4v6" fill="none" stroke="#E03030" stroke-width="2.200"/><path d="M3 12c3-7 8-7 11-2" fill="none" stroke="#3C78E0" stroke-width="2.200"/><path d="M2 14l4-4 3 3 2.500-2 3 3z" fill="#30A048"/><path d="M4 13.500h10" stroke="#fff" stroke-width="1" stroke-dasharray="1.500 1.500"/></g>
</g>
<rect x="900" y="284" width="25" height="25" fill="#D4D0C8" />
<rect x="900" y="284" width="24" height="1" fill="#FFFFFF" />
<rect x="900" y="284" width="1" height="24" fill="#FFFFFF" />
<rect x="900" y="308" width="25" height="1" fill="#404040" />
<rect x="924" y="284" width="1" height="25" fill="#404040" />
<rect x="901" y="307" width="23" height="1" fill="#808080" />
<rect x="923" y="285" width="1" height="23" fill="#808080" />
<g shape-rendering="auto">
<g transform="translate(904.7,288.2)"><rect x="0.500" y="3.500" width="16" height="10.500" rx="1" fill="#989898" stroke="#484848" stroke-width="1"/><rect x="3" y="1.500" width="6" height="2.500" fill="#787878"/><rect x="12.500" y="1.500" width="2.500" height="2.500" fill="#404040"/><circle cx="6.800" cy="8.800" r="4.300" fill="#5C98E8" stroke="#C8D4E8" stroke-width="1.300"/><rect x="12.500" y="5" width="3" height="8.500" fill="#484848"/><rect x="13.300" y="5.500" width="1" height="7.500" fill="#A0A0A0"/></g>
</g>
<rect x="899" y="340" width="25" height="25" fill="#D4D0C8" />
<rect x="899" y="340" width="24" height="1" fill="#FFFFFF" />
<rect x="899" y="340" width="1" height="24" fill="#FFFFFF" />
<rect x="899" y="364" width="25" height="1" fill="#404040" />
<rect x="923" y="340" width="1" height="25" fill="#404040" />
<rect x="900" y="363" width="23" height="1" fill="#808080" />
<rect x="922" y="341" width="1" height="23" fill="#808080" />
<g shape-rendering="auto">
<g transform="translate(904.5,345.5)"><rect x="0.500" y="0.500" width="9" height="9" fill="#B4CCF4" stroke="#5080D0"/><rect x="2.500" y="2.500" width="9" height="9" fill="#B4CCF4" stroke="#5080D0"/><rect x="4.500" y="4.500" width="10" height="10" fill="#8CB0EC" stroke="#3C6CC4"/><rect x="6.500" y="5.500" width="6" height="3" fill="#F0F4FF"/><rect x="6.500" y="10.500" width="6" height="2.500" fill="#68CC68"/></g>
</g>
<rect x="899" y="371" width="25" height="25" fill="#D4D0C8" />
<rect x="899" y="371" width="24" height="1" fill="#FFFFFF" />
<rect x="899" y="371" width="1" height="24" fill="#FFFFFF" />
<rect x="899" y="395" width="25" height="1" fill="#404040" />
<rect x="923" y="371" width="1" height="25" fill="#404040" />
<rect x="900" y="394" width="23" height="1" fill="#808080" />
<rect x="922" y="372" width="1" height="23" fill="#808080" />
<g shape-rendering="auto">
<g transform="translate(903.5,377)"><path d="M7.500 0.500h6l2 2v9h-8z" fill="#fff" stroke="#101010" stroke-width="1"/><path d="M9 3h4M9 5h5M9 7h5" stroke="#303030" stroke-width="1"/><path d="M0.500 6.500l1.500-1.500h4l1.500 2h0v3h7l-2.500 3.500h-11.500z" fill="#F0F070" stroke="#101010" stroke-width="1"/></g>
</g>
</svg>
</body></html>
